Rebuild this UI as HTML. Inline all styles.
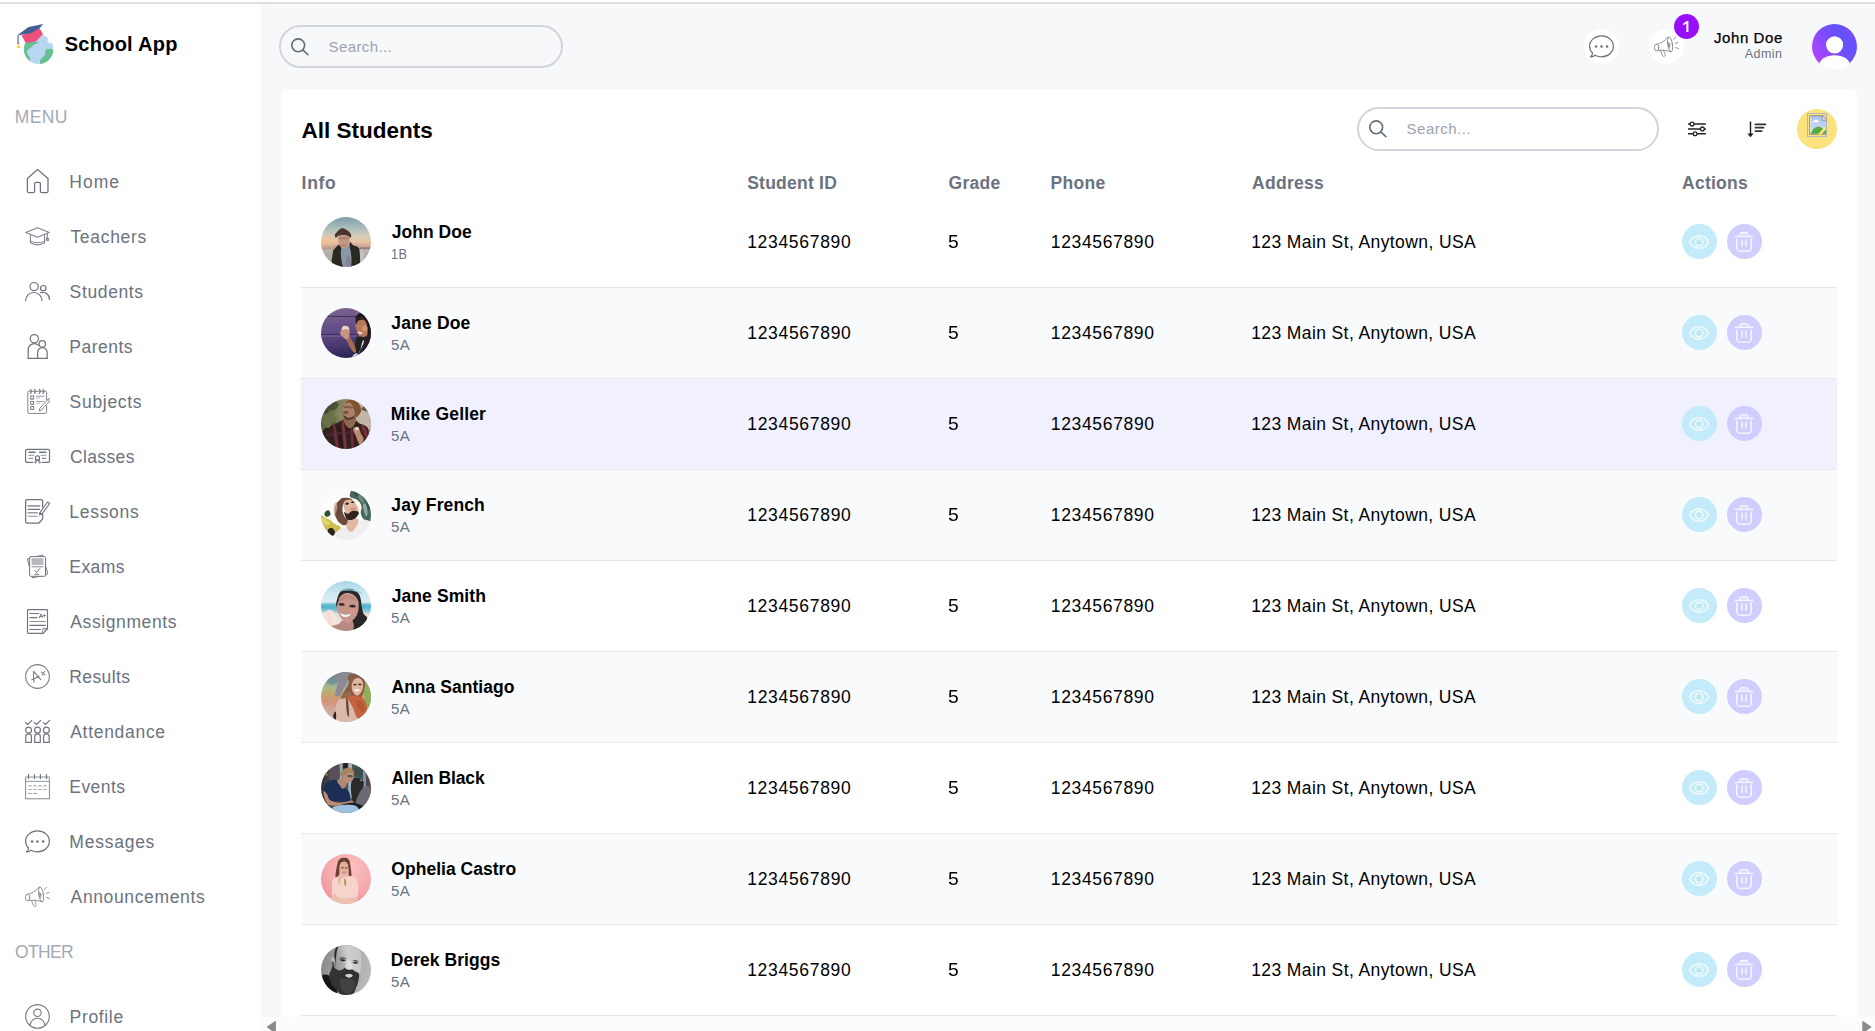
<!DOCTYPE html><html lang="en"><head><meta charset="utf-8"><title>School App</title><style>
*{box-sizing:border-box;margin:0;padding:0}
html,body{width:1875px;height:1031px;overflow:hidden;background:#f7f8fa}
body{font-family:"Liberation Sans",sans-serif;position:relative;color:#000;-webkit-font-smoothing:antialiased}
.abs{position:absolute}
.t{position:absolute;white-space:nowrap;line-height:1}
#topw{left:0;top:0;width:1875px;height:2px;background:#fff}
#topg{left:0;top:2px;width:1875px;height:2px;background:#dfe1df}
#side{left:0;top:4px;width:261px;height:1027px;background:#fff}
.mi{font-size:17.5px;color:#6b7280;left:70px}
.sec{font-size:17.5px;color:#a4aab5;left:16px;font-weight:400}
#card{left:281px;top:89px;width:1576px;height:960px;background:#fff;border-radius:7.5px}
.sb{border:2px solid #d1d5db;border-radius:22px}
.ph{color:#9ca3af;font-size:15px}
.th{font-size:17.5px;font-weight:700;color:#6b7280;top:174px}
.row{left:301px;width:1536px;height:91px;border-bottom:1px solid #e5e7eb}
.row.ev{background:#f8fafc}
.row.hv{background:#f1f0ff}
.nm{font-size:17.5px;font-weight:700;left:391px}
.cl{font-size:15px;color:#6b7280;left:391px}
.td{font-size:17.5px}
.btn{width:35px;height:35px;border-radius:50%}
</style></head><body>
<div id="topw" class="abs"></div><div id="topg" class="abs"></div>
<div id="side" class="abs"></div>
<svg class="abs" style="left:10px;top:15px" width="60" height="60" viewBox="0 0 60 60"><defs><clipPath id="gl"><circle cx="28.6" cy="34.3" r="14.7"/></clipPath></defs><circle cx="28.6" cy="34.3" r="14.7" fill="#b7d6f0"/><g clip-path="url(#gl)" fill="#68c08f"><path d="M13 27 C18 26 24 26.5 29 27.5 C27 29 24 28.5 22.5 31 C21.5 33 19 33 17.5 35.5 C16 38 18 40 19.5 42 C20.5 43.5 20 45.5 19.5 47 L12 44 Z"/><path d="M44 35 C40 33.5 37 33 35.5 35 C34.5 36.5 36 38.5 34.5 40.5 C33 42.5 30.5 43.5 30 46 L30 50 L42 46 Z"/></g><ellipse cx="39.3" cy="26" rx="1.7" ry="2.6" transform="rotate(-35 39.3 26)" fill="#f4fbff"/><path d="M11.6 20.4 L29.5 13.2 L33 19 L26 26.5 L15.5 27.8 Z" fill="#ee4f7b"/><path d="M7 20.4 L18.5 12 L33 9 L29.7 13.2 L20.8 18.3 Z" fill="#465e93"/><path d="M8.1 20.6 V28" stroke="#465e93" stroke-width="1.1" fill="none"/><rect x="7.2" y="27.8" width="1.8" height="1.4" fill="#ee4f7b"/><path d="M8.6 29 L10.8 33 H6.6 Z" fill="#f7d54a"/></svg>
<span id="brand" class="t " style="left:64.77px;top:33.91px;letter-spacing:0.248px;font-size:20px;font-weight:700;">School App</span>
<span id="menu" class="t sec" style="left:14.76px;top:109px;letter-spacing:0.392px;">MENU</span>
<div class="abs" style="left:25px;top:169px;width:25px;height:25px"><svg width="25" height="25" viewBox="0 0 25 25" fill="none" stroke="#70747f" stroke-width="1.3" stroke-linecap="round" stroke-linejoin="round" style="display:block;overflow:visible;"><g transform="translate(0,-0.5)"><path d="M12.5 0.9 L2.4 9.9 V22.8 a1.4 1.4 0 0 0 1.4 1.4 H8.2 a1.4 1.4 0 0 0 1.4-1.4 V15.2 a1.4 1.4 0 0 1 1.4-1.4 H14 a1.4 1.4 0 0 1 1.4 1.4 V22.8 a1.4 1.4 0 0 0 1.4 1.4 H21.6 a1.4 1.4 0 0 0 1.4-1.4 V9.9 Z"/></g></svg></div>
<span id="mi0" class="t mi" style="left:69.35px;top:173.71px;letter-spacing:1.005px;">Home</span>
<div class="abs" style="left:25px;top:224px;width:25px;height:25px"><svg width="25" height="25" viewBox="0 0 25 25" fill="none" stroke="#7d808a" stroke-width="1.05" stroke-linecap="round" stroke-linejoin="round" style="display:block;overflow:visible;"><g transform="translate(0,-0.5)"><path d="M12.5 4.3 L0.8 9.1 L12.5 13.8 L24.2 9.1 Z"/><path d="M5.4 11.2 V19.3 Q12.5 23.4 19.6 19.3 V11.2"/><path d="M5.4 17.6 Q12.5 21 19.6 17.6"/><path d="M22.3 10 V14.6"/><rect x="21.3" y="14.6" width="2.4" height="2.6" rx="0.4" fill="#9699a3" stroke-width="0.8"/></g></svg></div>
<span id="mi1" class="t mi" style="left:70.41px;top:228.71px;letter-spacing:0.7px;">Teachers</span>
<div class="abs" style="left:25px;top:279px;width:25px;height:25px"><svg width="25" height="25" viewBox="0 0 25 25" fill="none" stroke="#70747f" stroke-width="1.2" stroke-linecap="round" stroke-linejoin="round" style="display:block;overflow:visible;"><g transform="translate(0,-0.5)"><circle cx="9.1" cy="8.1" r="4.1"/><circle cx="18.25" cy="9.7" r="2.7"/><path d="M0.6 22.2 a8.2 8.2 0 0 1 16.4 0"/><path d="M15.6 14.2 C20.4 13.2 24.5 16 24.5 21"/></g></svg></div>
<span id="mi2" class="t mi" style="left:69.61px;top:283.71px;letter-spacing:0.633px;">Students</span>
<div class="abs" style="left:25px;top:334px;width:25px;height:25px"><svg width="25" height="25" viewBox="0 0 25 25" fill="none" stroke="#70747f" stroke-width="1.25" stroke-linecap="round" stroke-linejoin="round" style="display:block;overflow:visible;"><g transform="translate(0,-0.5)"><circle cx="9.3" cy="5.2" r="4.1"/><circle cx="17.3" cy="10.4" r="3.2"/><path d="M3.2 24.9 V16.2 a6.1 6.1 0 0 1 10.4 -4.3"/><path d="M3.2 24.9 H22.1"/><path d="M12.65 24.9 V18.8 a4.75 4.75 0 0 1 9.5 0 V24.9"/></g></svg></div>
<span id="mi3" class="t mi" style="left:69.35px;top:338.71px;letter-spacing:0.494px;">Parents</span>
<div class="abs" style="left:25px;top:389px;width:25px;height:25px"><svg width="25" height="25" viewBox="0 0 25 25" fill="none" stroke="#7d808a" stroke-width="0.95" stroke-linecap="round" stroke-linejoin="round" style="display:block;overflow:visible;"><g transform="translate(0,-0.5)"><path d="M21.6 11.5 V4 a1.2 1.2 0 0 0 -1.2 -1.2 H4 a1.2 1.2 0 0 0 -1.2 1.2 V23.7 a1.2 1.2 0 0 0 1.2 1.2 H20.4 a1.2 1.2 0 0 0 1.2 -1.2 V17.5"/><path d="M5.4 0.9 l1.4 2 l-1.4 2 M9.4 0.9 l1.4 2 l-1.4 2 M14.2 0.9 l1.4 2 l-1.4 2 M17.9 0.9 l1.4 2 l-1.4 2" stroke-width="1.2"/><g stroke-linejoin="miter" stroke-width="1.05"><rect x="5.7" y="7.2" width="2.9" height="3.4" rx="0.3"/><rect x="5.7" y="12.9" width="2.9" height="3" rx="0.2"/><rect x="5.7" y="18" width="2.9" height="3" rx="0.2"/></g><path d="M11.6 7.7 H19" stroke="#9c9fa8" stroke-width="1.1"/><path d="M11.6 9.6 H15" stroke="#b3b5bc" stroke-width="0.9"/><path d="M11.6 13 H19" stroke="#80838d" stroke-width="0.75"/><path d="M11.6 14.9 H15" stroke="#a6a8b0" stroke-width="0.75"/><path d="M14.4 22.2 L14.9 19.6 L22.9 11 L24.7 12.7 L16.7 21.3 Z M22.5 11.3 l2.2 -1.4" fill="#fff"/></g></svg></div>
<span id="mi4" class="t mi" style="left:69.61px;top:393.71px;letter-spacing:0.696px;">Subjects</span>
<div class="abs" style="left:25px;top:444px;width:25px;height:25px"><svg width="25" height="25" viewBox="0 0 25 25" fill="none" stroke="#70747f" stroke-width="1.2" stroke-linecap="round" stroke-linejoin="round" style="display:block;overflow:visible;"><g transform="translate(0,-0.5)"><path d="M7.7 18.9 H1.9 a1.3 1.3 0 0 1 -1.3 -1.3 V7.15 a1.3 1.3 0 0 1 1.3 -1.3 H23.2 a1.3 1.3 0 0 1 1.3 1.3 V17.6 a1.3 1.3 0 0 1 -1.3 1.3 H17.2"/><path d="M3.9 8.75 H10 M14.6 8.75 H20.9" stroke-width="1.3"/><path d="M3.9 11.8 H8.8 M16.1 11.8 H20.9 M3.9 14.85 H7.6 M17.3 14.85 H20.9" stroke="#8c8f9a" stroke-width="1.1"/><circle cx="12.5" cy="14.5" r="2.05"/><path d="M10.9 16 L9.6 19.4 L10.6 19.7 L11.8 16.6 M14.1 16 L15.4 19.4 L14.4 19.7 L13.2 16.6" stroke-width="0.9"/></g></svg></div>
<span id="mi5" class="t mi" style="left:69.88px;top:448.71px;letter-spacing:0.388px;">Classes</span>
<div class="abs" style="left:25px;top:499px;width:25px;height:25px"><svg width="25" height="25" viewBox="0 0 25 25" fill="none" stroke="#70747f" stroke-width="1.3" stroke-linecap="round" stroke-linejoin="round" style="display:block;overflow:visible;"><g transform="translate(0,-0.5)"><path d="M17.6 8.6 V2.5 a1.4 1.4 0 0 0 -1.4 -1.4 H2 a1.4 1.4 0 0 0 -1.4 1.4 V23.3 a1.4 1.4 0 0 0 1.4 1.4 H13.2 a1.4 1.4 0 0 0 1 -0.4 L17.2 21 a1.4 1.4 0 0 0 0.4 -1 V16"/><path d="M3.1 7.4 H14.6" stroke="#9a9ca3" stroke-width="1.6"/><path d="M3.1 10.9 H14.6" stroke-width="1.1"/><path d="M3.1 14.3 H12.2" stroke="#9a9ca3" stroke-width="1.5"/><path d="M3.1 17.7 H12.2" stroke="#8c8f9a" stroke-width="1.1"/><path d="M14.5 16.2 L15 13.9 L22.6 3.5 L24.7 5 L17.1 15.4 Z" fill="#fff" stroke-width="1.1"/><path d="M14.5 16.2 L15 13.9 L16.9 15.3 Z" fill="#70747f" stroke-width="0.6"/></g></svg></div>
<span id="mi6" class="t mi" style="left:69.35px;top:503.71px;letter-spacing:0.703px;">Lessons</span>
<div class="abs" style="left:25px;top:554px;width:25px;height:25px"><svg width="25" height="25" viewBox="0 0 25 25" fill="none" stroke="#70747f" stroke-width="1.0" stroke-linecap="round" stroke-linejoin="round" style="display:block;overflow:visible;"><g transform="translate(0,-0.5)"><rect x="4.6" y="3.1" width="15.9" height="19.7" rx="1" transform="rotate(-15 12.5 13)" stroke-width="1.0" stroke="#7a7d88"/><rect x="4.6" y="3.1" width="15.9" height="19.7" rx="1" fill="#fff"/><rect x="6.6" y="4.7" width="11.8" height="6.8" fill="#b7b9bf" stroke="none"/><path d="M6.6 13.2 H18.4" stroke="#a9abb3" stroke-width="1.4" stroke-linecap="butt"/><path d="M9.9 16.9 L11.6 19.2 L14.7 15.2" stroke-width="0.9"/><path d="M9.7 20.8 H13.7" stroke-width="1"/></g></svg></div>
<span id="mi7" class="t mi" style="left:69.35px;top:558.71px;letter-spacing:0.404px;">Exams</span>
<div class="abs" style="left:25px;top:609px;width:25px;height:25px"><svg width="25" height="25" viewBox="0 0 25 25" fill="none" stroke="#70747f" stroke-width="1.15" stroke-linecap="round" stroke-linejoin="round" style="display:block;overflow:visible;"><g transform="translate(0,-0.5)"><path d="M22.5 20.3 V1.9 a0.8 0.8 0 0 0 -0.8 -0.8 H3.3 a0.8 0.8 0 0 0 -0.8 0.8 V24.1 a0.8 0.8 0 0 0 0.8 0.8 H18.2 Z"/><path d="M18.2 24.9 C17.5 23 17.3 21.5 18 19.9 H22.5 C21.5 21.5 20.5 21.6 19.6 21.5" stroke-width="0.9"/><path d="M4.9 5 H13.6 M4.9 9.1 H12 M4.9 16.9 H20.2 M4.9 21 H15.4" stroke-width="1.1"/><path d="M4.9 13 H20.2" stroke="#8c8f9a" stroke-width="1.1"/><path d="M14.4 9.2 L16.2 5.3 L18 9.2 M15 8 H17.4" stroke-width="0.95"/><path d="M18.5 7 H20.5 M19.5 6 V8" stroke-width="0.8"/></g></svg></div>
<span id="mi8" class="t mi" style="left:70.26px;top:613.71px;letter-spacing:0.61px;">Assignments</span>
<div class="abs" style="left:25px;top:664px;width:25px;height:25px"><svg width="25" height="25" viewBox="0 0 25 25" fill="none" stroke="#7a7d88" stroke-width="1.0" stroke-linecap="round" stroke-linejoin="round" style="display:block;overflow:visible;"><g transform="translate(0,-0.5)"><circle cx="12.5" cy="13" r="11.85" stroke-width="1.1"/><path d="M9.1 18.8 C8.4 14.5 8.2 11 8.7 7.8 C11 10.5 13.5 13.5 15.7 16.2 M6.8 16.2 C9.5 15.3 12 13.8 14 12.5" stroke-width="1.1"/><path d="M16.4 8.6 L20 11.2 M19.4 7.9 L17.2 11.8" stroke-width="1.05"/></g></svg></div>
<span id="mi9" class="t mi" style="left:69.35px;top:668.71px;letter-spacing:0.385px;">Results</span>
<div class="abs" style="left:25px;top:719px;width:25px;height:25px"><svg width="25" height="25" viewBox="0 0 25 25" fill="none" stroke="#70747f" stroke-width="1.2" stroke-linecap="round" stroke-linejoin="round" style="display:block;overflow:visible;"><g transform="translate(0,-0.5)"><circle cx="3.6" cy="11.6" r="2.95"/><path d="M0.8000000000000003 23.9 V18.2 a2.8 2.8 0 0 1 5.6 0 V23.9 Z"/><path d="M0.3999999999999999 3.9 L2.7 6 L6.800000000000001 1.8" stroke-width="1.15"/><circle cx="12.5" cy="11.6" r="2.95"/><path d="M9.7 23.9 V18.2 a2.8 2.8 0 0 1 5.6 0 V23.9 Z"/><path d="M9.3 3.9 L11.6 6 L15.7 1.8" stroke-width="1.15"/><circle cx="21.4" cy="11.6" r="2.95"/><path d="M18.599999999999998 23.9 V18.2 a2.8 2.8 0 0 1 5.6 0 V23.9 Z"/><path d="M18.2 3.9 L20.5 6 L24.599999999999998 1.8" stroke-width="1.15"/></g></svg></div>
<span id="mi10" class="t mi" style="left:70.26px;top:723.71px;letter-spacing:0.696px;">Attendance</span>
<div class="abs" style="left:25px;top:774px;width:25px;height:25px"><svg width="25" height="25" viewBox="0 0 25 25" fill="none" stroke="#70747f" stroke-width="0.9" stroke-linecap="round" stroke-linejoin="round" style="display:block;overflow:visible;"><g transform="translate(0,-0.5)"><path d="M0.6 24.9 V3.6 H24.4 V24.9 Z" stroke-width="0.85" stroke-linejoin="miter"/><path d="M0.6 3.6 H24.4" stroke="#c4c6cc" stroke-width="1.3"/><path d="M0.6 7.9 H24.4" stroke-width="0.9" stroke="#8c8f9a"/><path d="M3.5 1 V5.1" stroke-width="1.15"/><path d="M9.4 1 V5.1" stroke-width="1.15"/><path d="M15.4 1 V5.1" stroke-width="1.15"/><path d="M21.5 1 V5.1" stroke-width="1.15"/><path d="M3.3 12.3 H6.699999999999999" stroke="#b9bbc2" stroke-width="1.5" stroke-linecap="butt"/><path d="M8.3 12.3 H11.700000000000001" stroke="#b9bbc2" stroke-width="1.5" stroke-linecap="butt"/><path d="M13.3 12.3 H16.7" stroke="#b9bbc2" stroke-width="1.5" stroke-linecap="butt"/><path d="M18.3 12.3 H21.7" stroke="#b9bbc2" stroke-width="1.5" stroke-linecap="butt"/><path d="M3.3 16.0 H6.699999999999999" stroke="#a6a8b1" stroke-width="1.0" stroke-linecap="butt"/><path d="M8.3 16.0 H11.700000000000001" stroke="#a6a8b1" stroke-width="1.0" stroke-linecap="butt"/><path d="M13.3 16.0 H16.7" stroke="#a6a8b1" stroke-width="1.0" stroke-linecap="butt"/><path d="M18.3 16.0 H21.7" stroke="#a6a8b1" stroke-width="1.0" stroke-linecap="butt"/><path d="M3.3 19.9 H6.699999999999999" stroke="#8e919c" stroke-width="1.0" stroke-linecap="butt"/><path d="M8.3 19.9 H11.700000000000001" stroke="#8e919c" stroke-width="1.0" stroke-linecap="butt"/></g></svg></div>
<span id="mi11" class="t mi" style="left:69.35px;top:778.71px;letter-spacing:0.426px;">Events</span>
<div class="abs" style="left:25px;top:829px;width:25px;height:25px"><svg width="25" height="25" viewBox="0 0 25 25" fill="none" stroke="#70747f" stroke-width="1.25" stroke-linecap="round" stroke-linejoin="round" style="display:block;overflow:visible;"><g transform="translate(0,-0.5)"><path d="M3.5 19.5 C1.7 17.8 0.6 15.4 0.6 12.8 C0.6 7 5.9 2.3 12.5 2.3 S24.4 7 24.4 12.8 S19.1 23.3 12.5 23.3 C10.1 23.3 7.9 22.7 6.1 21.7 C4.9 22.8 3.4 23.6 1.5 23.3 C2.9 22.3 3.7 21 3.5 19.5 Z"/><circle cx="7.1" cy="13" r="1.3" fill="#70747f" stroke="none"/><circle cx="12.5" cy="13" r="1.3" fill="#70747f" stroke="none"/><circle cx="18.1" cy="13" r="1.3" fill="#70747f" stroke="none"/></g></svg></div>
<span id="mi12" class="t mi" style="left:69.35px;top:833.71px;letter-spacing:0.753px;">Messages</span>
<div class="abs" style="left:25px;top:884px;width:25px;height:25px"><svg width="25" height="25" viewBox="0 0 25 25" fill="none" stroke="#858892" stroke-width="0.9" stroke-linecap="round" stroke-linejoin="round" style="display:block;overflow:visible;"><g transform="translate(0,-0.5)"><ellipse cx="2.6" cy="14" rx="2.25" ry="3.35"/><path d="M2.9 10.7 C7 10 11 7.5 14 3.6"/><path d="M3.6 17.2 C8 16 13 17 17.2 18.3"/><ellipse cx="16.1" cy="10.9" rx="2.3" ry="7.6" transform="rotate(-9 16.1 10.9)"/><ellipse cx="15" cy="11.5" rx="0.8" ry="2.8" transform="rotate(-9 15 11.5)"/><path d="M6.5 17 L8.3 21.6 C8.8 23 10 23.3 10.7 22.6 C11.4 21.9 11.2 21 10.8 20 L9.5 16.6"/><path d="M19.4 5.9 L21.7 3.7 M21.2 10 L23.8 9 M21.7 14 L24.6 15"/></g></svg></div>
<span id="mi13" class="t mi" style="left:70.58px;top:888.71px;letter-spacing:0.634px;">Announcements</span>
<span id="other" class="t sec" style="left:14.97px;top:943.91px;letter-spacing:-0.622px;">OTHER</span>
<div class="abs" style="left:25px;top:1004px;width:25px;height:25px"><svg width="25" height="25" viewBox="0 0 25 25" fill="none" stroke="#767984" stroke-width="1.1" stroke-linecap="round" stroke-linejoin="round" style="display:block;overflow:visible;"><g transform="translate(0,-0.5)"><circle cx="12.5" cy="12.9" r="11.8"/><circle cx="12.5" cy="9.3" r="3.7"/><path d="M5.2 22 a7.3 7.3 0 0 1 14.6 0"/></g></svg></div>
<span id="mi14" class="t mi" style="left:69.59px;top:1008.5px;letter-spacing:0.655px;">Profile</span>
<div class="abs sb" style="left:279px;top:25px;width:284px;height:43px"></div>
<div class="abs" style="left:290px;top:37px;width:19px;height:19px"><svg width="19" height="19" viewBox="0 0 19 19" fill="none" stroke="#626d7b" stroke-width="1.6" stroke-linecap="round" stroke-linejoin="round" style="display:block;overflow:visible;"><g transform="translate(0,0)"><circle cx="8.2" cy="8.3" r="6.4"/><path d="M13 13.1 L17.9 17.6"/></g></svg></div>
<span id="s1" class="t ph" style="left:328.6px;top:39.21px;letter-spacing:0.39px;">Search...</span>
<div class="abs" style="left:1584px;top:29px;width:35px;height:35px;border-radius:50%;background:#fff"><div style="position:absolute;left:5px;top:5px"><svg width="25" height="25" viewBox="0 0 25 25" fill="none" stroke="#70747f" stroke-width="1.25" stroke-linecap="round" stroke-linejoin="round" style="display:block;overflow:visible;"><g transform="translate(0,-0.5)"><path d="M3.5 19.5 C1.7 17.8 0.6 15.4 0.6 12.8 C0.6 7 5.9 2.3 12.5 2.3 S24.4 7 24.4 12.8 S19.1 23.3 12.5 23.3 C10.1 23.3 7.9 22.7 6.1 21.7 C4.9 22.8 3.4 23.6 1.5 23.3 C2.9 22.3 3.7 21 3.5 19.5 Z"/><circle cx="7.1" cy="13" r="1.3" fill="#70747f" stroke="none"/><circle cx="12.5" cy="13" r="1.3" fill="#70747f" stroke="none"/><circle cx="18.1" cy="13" r="1.3" fill="#70747f" stroke="none"/></g></svg></div></div>
<div class="abs" style="left:1649px;top:29px;width:35px;height:35px;border-radius:50%;background:#fff"><div style="position:absolute;left:5px;top:5px"><svg width="25" height="25" viewBox="0 0 25 25" fill="none" stroke="#858892" stroke-width="0.9" stroke-linecap="round" stroke-linejoin="round" style="display:block;overflow:visible;"><g transform="translate(0,-0.5)"><ellipse cx="2.6" cy="14" rx="2.25" ry="3.35"/><path d="M2.9 10.7 C7 10 11 7.5 14 3.6"/><path d="M3.6 17.2 C8 16 13 17 17.2 18.3"/><ellipse cx="16.1" cy="10.9" rx="2.3" ry="7.6" transform="rotate(-9 16.1 10.9)"/><ellipse cx="15" cy="11.5" rx="0.8" ry="2.8" transform="rotate(-9 15 11.5)"/><path d="M6.5 17 L8.3 21.6 C8.8 23 10 23.3 10.7 22.6 C11.4 21.9 11.2 21 10.8 20 L9.5 16.6"/><path d="M19.4 5.9 L21.7 3.7 M21.2 10 L23.8 9 M21.7 14 L24.6 15"/></g></svg></div></div>
<div class="abs" style="left:1674px;top:14px;width:25px;height:25px;border-radius:50%;background:#9810fa"></div>
<svg class="abs" style="left:1674px;top:14px" width="25" height="25" viewBox="1674 14 25 25"><path d="M1688.4 21.1 V32.1 H1686.35 V23.55 L1683.3 25.5 V23.45 L1686.7 21.1 Z" fill="#fff"/></svg>
<span id="uname" class="t " style="left:1714.06px;top:30.3px;letter-spacing:0.573px;font-size:15px;font-weight:400;-webkit-text-stroke:0.25px #000;">John Doe</span>
<span id="urole" class="t " style="left:1744.74px;top:47.91px;letter-spacing:0.475px;font-size:12.5px;color:#6b7280;">Admin</span>
<div class="abs" style="left:1812px;top:24px;width:45px;height:45px;border-radius:50%;overflow:hidden"><svg width="45" height="45" viewBox="0 0 45 45" style="display:block"><defs><linearGradient id="ag" x1="0.1" y1="0.85" x2="0.95" y2="0.35"><stop offset="0" stop-color="#ad46ff"/><stop offset="0.5" stop-color="#7a4bfb"/><stop offset="0.85" stop-color="#5f53fd"/><stop offset="1" stop-color="#7a4cf8"/></linearGradient><clipPath id="ac"><circle cx="22.5" cy="22.5" r="22.5"/></clipPath></defs><rect width="45" height="40" fill="url(#ag)"/><rect y="39.5" width="45" height="6" fill="#fff"/><g fill="#fff"><circle cx="22.6" cy="20.8" r="8.6"/><ellipse cx="22.6" cy="42" rx="15.7" ry="10.8"/></g></svg></div>
<div id="card" class="abs"></div>
<span id="title" class="t " style="left:301.4px;top:119.91px;letter-spacing:0.013px;font-size:22.5px;font-weight:700;">All Students</span>
<div class="abs sb" style="left:1357px;top:107px;width:302px;height:44px"></div>
<div class="abs" style="left:1368px;top:119px;width:19px;height:19px"><svg width="19" height="19" viewBox="0 0 19 19" fill="none" stroke="#626d7b" stroke-width="1.6" stroke-linecap="round" stroke-linejoin="round" style="display:block;overflow:visible;"><g transform="translate(0,0)"><circle cx="8.2" cy="8.3" r="6.4"/><path d="M13 13.1 L17.9 17.6"/></g></svg></div>
<span id="s2" class="t ph" style="left:1406.61px;top:121.0px;letter-spacing:0.496px;">Search...</span>
<div class="abs" style="left:1686px;top:118px;width:22px;height:22px"><svg width="22" height="22" viewBox="0 0 22 22" fill="none" stroke="#262626" stroke-width="1.5" style="display:block;overflow:visible"><path d="M2 6.1 H19.9 M2 10.9 H19.9 M2 15.75 H19.9"/><circle cx="6.1" cy="6.1" r="1.9" fill="#fff" stroke-width="1.3"/><circle cx="16.4" cy="10.9" r="1.9" fill="#fff" stroke-width="1.3"/><circle cx="9.1" cy="15.75" r="1.9" fill="#fff" stroke-width="1.3"/></svg></div>
<div class="abs" style="left:1745px;top:118px;width:22px;height:22px"><svg width="22" height="22" viewBox="0 0 22 22" fill="none" stroke="#1a1a1a" stroke-width="1.6" stroke-linecap="round" style="display:block;overflow:visible"><path d="M5.5 4.2 V17.6" stroke-width="1.4"/><path d="M3.2 16.1 L5.5 18.9 L7.8 16.1 Z" fill="#1a1a1a" stroke-width="0.6" stroke-linejoin="round"/><path d="M10.4 6.4 H20.5 M10.4 9.7 H18.6 M10.4 13.1 H16.7" stroke="#333" stroke-width="1.7"/></svg></div>
<div class="abs" style="left:1797px;top:109px;width:40px;height:40px;border-radius:50%;background:#fae27c"></div>
<div class="abs" style="left:1807px;top:113px;width:20px;height:24px"><svg width="20" height="24" viewBox="0 0 20 24" style="display:block"><defs><linearGradient id="sky" x1="0" y1="0" x2="0" y2="1"><stop offset="0" stop-color="#a9c4ee"/><stop offset="1" stop-color="#d3dff3"/></linearGradient><clipPath id="bc"><rect x="2.2" y="2.2" width="17" height="19.6"/></clipPath></defs><rect x="0.5" y="0.5" width="19" height="23" fill="none" stroke="#b3b6c3" stroke-width="1"/><g clip-path="url(#bc)"><rect x="2.2" y="2.2" width="18" height="19.6" fill="#77787c"/><rect x="3.3" y="3.2" width="17" height="17.6" fill="url(#sky)"/><rect x="3.3" y="3.2" width="1" height="17.6" fill="#e8eefa"/><path d="M5.3 9.2 Q5.6 7.6 7.3 7.7 Q8.6 5.4 10.6 7.2 Q12 7.2 11.9 9.2 Z" fill="#fff"/><path d="M3.8 20.8 C6 13.5 13 11.5 17 17 L19.5 14.5 V20.8 Z" fill="#55ad3a"/><path d="M15.3 2.2 V7.2 H20 V2.2 Z" fill="#fae27c"/><path d="M15.3 2.2 L15.3 7.2 L20 7.2 Z" fill="#e8e9ec" stroke="#8a8b90" stroke-width="0.9"/><path d="M19.5 12.2 L10.4 21.8 H14 L19.5 16 Z" fill="#fae27c"/></g></svg></div>
<span id="th0" class="t th" style="left:301.59px;top:174.91px;letter-spacing:0.695px;">Info</span>
<span id="th1" class="t th" style="left:747.2px;top:174.91px;letter-spacing:0.239px;">Student ID</span>
<span id="th2" class="t th" style="left:948.52px;top:174.91px;letter-spacing:0.292px;">Grade</span>
<span id="th3" class="t th" style="left:1050.59px;top:174.91px;letter-spacing:0.28px;">Phone</span>
<span id="th4" class="t th" style="left:1252.06px;top:174.91px;letter-spacing:0.285px;">Address</span>
<span id="th5" class="t th" style="left:1682.1px;top:174.91px;letter-spacing:0.236px;">Actions</span>
<div class="abs row" style="top:197px"></div>
<div class="abs" style="left:321px;top:217px;width:50px;height:50px"><svg width="50" height="50" viewBox="0 0 50 50" style="display:block"><defs><clipPath id="c0"><circle cx="25" cy="25" r="25"/></clipPath><filter id="b0" x="-20%" y="-20%" width="140%" height="140%"><feGaussianBlur stdDeviation="0.55"/></filter><linearGradient id="g0" x1="0" y1="0" x2="0" y2="1"><stop offset="0" stop-color="#7b9eab"/><stop offset="0.22" stop-color="#a9bdbb"/><stop offset="0.36" stop-color="#cfcbb9"/><stop offset="0.48" stop-color="#e9c8a6"/><stop offset="0.58" stop-color="#d0a898"/><stop offset="0.635" stop-color="#b89a92"/><stop offset="0.66" stop-color="#b9b3ad"/><stop offset="1" stop-color="#aaa39c"/></linearGradient><radialGradient id="gl0"><stop offset="0" stop-color="#f5c08a" stop-opacity="0.85"/><stop offset="1" stop-color="#f0c090" stop-opacity="0"/></radialGradient></defs><g clip-path="url(#c0)"><rect width="50" height="50" fill="url(#g0)"/><g filter="url(#b0)"><ellipse cx="4" cy="24.5" rx="14" ry="6" fill="url(#gl0)"/><rect x="39.00" y="30.38" width="11.06" height="1.46" fill="#8d7a76"/><path d="M39.00 33.29 C39.83 31.25 41.79 32.86 42.49 35.04 C43.20 37.22 43.03 41.14 42.20 43.19 C41.37 45.24 39.41 46.53 38.71 44.35 C38.00 42.18 38.17 35.34 39.00 33.29Z" fill="#bcc4c8"/><path d="M11.64 51.05 C9.27 47.53 11.55 39.20 11.93 35.04 C12.32 30.88 11.98 33.80 13.39 32.13 C14.80 30.47 16.80 27.86 18.34 27.47 C19.87 27.09 19.67 28.98 20.37 30.38 C21.08 31.79 21.02 29.33 21.54 33.88 C22.05 38.42 24.88 47.27 22.70 51.05 C20.52 54.83 14.01 54.57 11.64 51.05Z" fill="#2a2a24"/><path d="M29.69 51.05 C28.15 47.27 29.36 38.42 29.10 33.88 C28.85 29.33 28.52 32.31 28.52 30.38 C28.52 28.46 28.34 25.66 29.10 25.15 C29.87 24.63 30.22 26.90 32.01 28.06 C33.81 29.21 35.82 29.10 37.25 30.38 C38.69 31.66 38.17 30.55 38.53 33.88 C38.89 37.21 39.42 41.74 38.88 45.52 C38.34 49.30 38.11 49.83 36.09 51.05 C34.07 52.26 31.22 54.83 29.69 51.05Z" fill="#2a2a24"/><path d="M20.37 30.97 C21.68 26.42 26.45 25.97 28.52 30.38 C30.60 34.80 31.11 46.50 29.80 51.05 C28.50 55.59 24.66 55.47 22.58 51.05 C20.51 46.63 19.07 35.51 20.37 30.97Z" fill="#8997a6"/><path d="M25.03 41.44 C25.67 38.95 27.50 37.58 28.52 39.70 C29.55 41.81 30.33 48.55 29.69 51.05 C29.05 53.54 26.64 53.16 25.61 51.05 C24.59 48.93 24.39 43.94 25.03 41.44Z" fill="#857d97" opacity="0.85"/><path d="M17.46 19.32 C18.44 17.79 19.92 18.22 22.12 18.16 C24.32 18.10 26.04 18.14 27.47 19.03 C28.91 19.93 28.51 20.51 28.64 22.24 C28.77 23.96 28.66 25.10 28.06 26.89 C27.45 28.68 27.21 29.42 25.90 30.38 C24.60 31.34 23.59 31.49 22.12 31.26 C20.65 31.03 20.18 30.68 19.21 29.34 C18.24 27.99 18.08 27.35 17.69 25.15 C17.31 22.94 16.49 20.86 17.46 19.32Z" fill="#c29883"/><path d="M18.63 20.78 C20.36 20.37 24.92 20.19 26.78 20.49 C28.63 20.78 28.80 21.71 27.07 22.12 C25.34 22.53 20.77 22.65 18.92 22.35 C17.06 22.06 16.90 21.19 18.63 20.78Z" fill="#9a7565" opacity="0.7"/><path d="M20.37 27.47 C21.40 27.15 24.59 27.15 25.61 27.47 C26.64 27.79 26.05 28.61 25.03 28.93 C24.00 29.25 21.98 29.25 20.95 28.93 C19.93 28.61 19.35 27.79 20.37 27.47Z" fill="#a8766a" opacity="0.6"/><path d="M14.55 16.41 C15.35 15.26 16.31 14.53 17.46 13.50 C18.61 12.48 18.64 12.21 19.79 11.76 C20.94 11.31 21.42 11.21 22.70 11.47 C23.98 11.72 24.33 12.09 25.61 12.92 C26.89 13.75 27.52 14.10 28.52 15.25 C29.52 16.40 29.97 16.98 30.15 18.16 C30.33 19.34 30.08 20.45 29.34 20.61 C28.59 20.76 28.36 19.45 26.78 18.86 C25.19 18.27 24.17 17.93 22.12 17.93 C20.07 17.93 19.02 18.24 17.46 18.86 C15.90 19.47 15.81 20.75 15.02 20.72 C14.22 20.70 13.96 19.69 13.85 18.74 C13.75 17.80 13.76 17.57 14.55 16.41Z" fill="#49342d"/></g></g></svg></div>
<span id="nm0" class="t nm" style="left:391.65px;top:223.8px;letter-spacing:0.043px;">John Doe</span>
<span id="cl0" class="t cl" style="left:390.94px;top:245.61px;letter-spacing:0.332px;transform:scaleX(0.86);transform-origin:0 0;">1B</span>
<span id="id0" class="t td sid" style="left:747.14px;top:233.8px;letter-spacing:0.702px;">1234567890</span>
<span id="gr0" class="t td gr" style="left:948.1px;top:233.8px;transform:scaleX(1.1);transform-origin:0 0;">5</span>
<span id="phn0" class="t td phn" style="left:1050.86px;top:233.8px;letter-spacing:0.636px;">1234567890</span>
<span id="ad0" class="t td ad" style="left:1251.13px;top:233.8px;letter-spacing:0.401px;">123 Main St, Anytown, USA</span>
<div class="abs btn" style="left:1682px;top:224px;background:#c3ebfa"><svg width="35" height="35" viewBox="0 0 35 35" fill="none" stroke="#f2fbff" stroke-width="1.5" style="display:block"><path d="M7.7 18 C11.5 9.8 22.7 9.8 26.5 18 C22.7 26.2 11.5 26.2 7.7 18 Z" stroke-linejoin="round"/><circle cx="17.1" cy="18" r="3.7" fill="#b5e6ec" fill-opacity="0.4"/></svg></div>
<div class="abs btn" style="left:1727px;top:224px;background:#cfceff"><svg width="35" height="35" viewBox="0 0 35 35" fill="none" stroke="#f6f5ff" stroke-width="1.6" style="display:block"><path d="M7.6 12.4 H26.2" stroke-width="1.5"/><path d="M13.2 12.2 V10.3 a1.6 1.6 0 0 1 1.6 -1.6 H19.2 a1.6 1.6 0 0 1 1.6 1.6 V12.2"/><path d="M14.6 10.5 H19.4" stroke-width="1.2" stroke="#e4e2ff"/><path d="M9.8 14.5 V23.9 a3.4 3.4 0 0 0 3.4 3.4 H20.8 a3.4 3.4 0 0 0 3.4 -3.4 V14.5"/><path d="M15 15.4 V22.8 M19 15.4 V22.8" stroke-width="1.6"/></svg></div>
<div class="abs row ev" style="top:288px"></div>
<div class="abs" style="left:321px;top:308px;width:50px;height:50px"><svg width="50" height="50" viewBox="0 0 50 50" style="display:block"><defs><clipPath id="c1"><circle cx="25" cy="25" r="25"/></clipPath><filter id="b1" x="-20%" y="-20%" width="140%" height="140%"><feGaussianBlur stdDeviation="0.55"/></filter><linearGradient id="g1" x1="0.2" y1="0" x2="0.35" y2="1"><stop offset="0" stop-color="#7f668f"/><stop offset="0.45" stop-color="#604b86"/><stop offset="0.75" stop-color="#4a3a72"/><stop offset="1" stop-color="#2a2552"/></linearGradient></defs><g clip-path="url(#c1)"><rect width="50" height="50" fill="url(#g1)"/><g filter="url(#b1)"><rect x="6.69" y="7.86" width="28.23" height="1.16" fill="#473260"/><rect x="0.00" y="25.96" width="34.34" height="1.28" fill="#3d2d62"/><rect x="0.00" y="27.47" width="34.34" height="1.05" fill="#7d6898"/><path d="M34.34 10.48 C34.34 9.71 34.81 8.27 36.09 6.98 C37.37 5.70 38.37 4.78 40.16 4.66 C41.96 4.53 42.70 5.12 44.24 6.40 C45.77 7.68 46.12 8.30 47.15 10.48 C48.17 12.65 48.23 13.48 48.89 16.30 C49.56 19.12 49.85 18.16 50.17 23.28 C50.49 28.41 51.14 34.97 50.35 39.58 C49.56 44.19 47.65 45.52 46.57 44.24 C45.48 42.96 45.40 37.86 45.40 33.76 C45.40 29.66 46.44 29.20 46.57 25.61 C46.69 22.03 46.62 20.41 45.98 17.46 C45.34 14.52 45.06 14.02 43.66 12.22 C42.25 10.43 41.25 9.70 39.58 9.31 C37.92 8.93 37.24 10.22 36.09 10.48 C34.94 10.73 34.34 11.25 34.34 10.48Z" fill="#1d1619"/><path d="M34.92 10.48 C36.08 9.20 37.66 8.93 39.58 9.31 C41.50 9.70 42.25 10.43 43.66 12.22 C45.06 14.02 45.34 15.03 45.98 17.46 C46.62 19.90 46.69 20.98 46.57 23.28 C46.44 25.59 46.30 26.63 45.40 27.94 C44.51 29.25 43.90 29.07 42.49 29.22 C41.08 29.37 40.28 29.43 39.00 28.64 C37.72 27.84 37.57 27.43 36.67 25.61 C35.77 23.79 35.44 22.68 34.92 20.37 C34.41 18.07 34.34 17.31 34.34 15.13 C34.34 12.96 33.77 11.76 34.92 10.48Z" fill="#b8785b"/><ellipse cx="43.66" cy="20.37" rx="2.62" ry="3.20" fill="#da9a7a" opacity="0.8"/><path d="M34.92 10.48 C35.88 8.94 37.66 8.93 39.58 9.31 C41.50 9.70 43.40 11.71 43.66 12.22 C43.91 12.74 42.15 11.51 40.75 11.64 C39.34 11.77 38.47 11.78 37.25 12.81 C36.04 13.83 35.73 16.81 35.22 16.30 C34.70 15.79 33.96 12.01 34.92 10.48Z" fill="#2a1b1c"/><path d="M36.96 23.75 C37.60 23.49 39.85 24.01 40.75 24.45 C41.64 24.88 41.68 25.47 41.04 25.73 C40.40 25.98 38.73 26.05 37.83 25.61 C36.94 25.18 36.32 24.00 36.96 23.75Z" fill="#f4e6e0"/><path d="M34.92 30.27 C35.82 28.37 36.75 28.87 38.42 28.64 C40.08 28.41 41.59 28.09 42.49 29.22 C43.39 30.35 42.88 31.99 42.49 33.76 C42.11 35.53 41.64 34.69 40.75 37.25 C39.85 39.81 39.95 43.54 38.42 45.40 C36.88 47.26 35.30 46.20 33.76 45.69 C32.22 45.18 31.30 44.93 31.43 43.07 C31.56 41.22 33.57 40.07 34.34 37.25 C35.11 34.44 34.03 32.16 34.92 30.27Z" fill="#1c2420"/><path d="M43.07 29.10 C43.97 27.57 44.97 29.22 46.57 27.94 C48.17 26.66 49.52 20.72 50.35 23.28 C51.18 25.84 51.44 34.91 50.35 39.58 C49.26 44.25 47.51 43.25 45.40 44.53 C43.29 45.81 41.39 47.51 40.75 45.40 C40.10 43.29 41.98 38.51 42.49 34.92 C43.00 31.34 42.18 30.64 43.07 29.10Z" fill="#2a1d20"/><path d="M41.33 33.76 C42.25 31.74 44.02 31.65 42.61 35.04 C41.20 38.43 37.38 46.20 34.92 49.19 C32.47 52.17 31.56 49.44 31.43 48.60 C31.30 47.77 32.81 46.36 34.34 45.40 C35.88 44.44 36.88 46.80 38.42 44.24 C39.95 41.68 40.41 35.78 41.33 33.76Z" fill="#d5cde8"/><path d="M25.03 30.27 C24.26 27.04 26.34 26.67 28.52 29.10 C30.70 31.54 34.16 38.10 34.92 41.33 C35.69 44.55 34.19 46.20 32.01 43.77 C29.84 41.34 25.80 33.49 25.03 30.27Z" fill="#a66b52"/><path d="M19.21 25.61 C19.21 23.43 20.38 20.36 21.54 18.63 C22.69 16.90 23.04 17.63 24.45 17.75 C25.86 17.88 27.02 17.48 27.94 19.21 C28.86 20.94 28.77 23.18 28.64 25.61 C28.51 28.04 28.15 28.96 27.36 30.27 C26.56 31.57 26.31 31.93 25.03 31.55 C23.75 31.16 22.82 29.83 21.54 28.52 C20.26 27.22 19.21 27.79 19.21 25.61Z" fill="#c9957b"/><path d="M21.25 19.21 C21.89 18.35 23.04 17.86 24.45 17.93 C25.86 17.99 27.01 18.64 27.65 19.50 C28.29 20.36 28.06 21.51 27.36 21.83 C26.65 22.15 25.73 20.95 24.45 20.95 C23.17 20.95 22.24 22.21 21.54 21.83 C20.83 21.44 20.61 20.07 21.25 19.21Z" fill="#e9d3ca"/></g></g></svg></div>
<span id="nm1" class="t nm" style="left:391.33px;top:314.8px;letter-spacing:0.162px;">Jane Doe</span>
<span id="cl1" class="t cl" style="left:390.96px;top:336.61px;letter-spacing:0.439px;">5A</span>
<span id="id1" class="t td sid" style="left:747.21px;top:324.8px;letter-spacing:0.7px;">1234567890</span>
<span id="gr1" class="t td gr" style="left:948.1px;top:324.8px;transform:scaleX(1.1);transform-origin:0 0;">5</span>
<span id="phn1" class="t td phn" style="left:1050.86px;top:324.8px;letter-spacing:0.638px;">1234567890</span>
<span id="ad1" class="t td ad" style="left:1251.17px;top:324.8px;letter-spacing:0.394px;">123 Main St, Anytown, USA</span>
<div class="abs btn" style="left:1682px;top:315px;background:#c3ebfa"><svg width="35" height="35" viewBox="0 0 35 35" fill="none" stroke="#f2fbff" stroke-width="1.5" style="display:block"><path d="M7.7 18 C11.5 9.8 22.7 9.8 26.5 18 C22.7 26.2 11.5 26.2 7.7 18 Z" stroke-linejoin="round"/><circle cx="17.1" cy="18" r="3.7" fill="#b5e6ec" fill-opacity="0.4"/></svg></div>
<div class="abs btn" style="left:1727px;top:315px;background:#cfceff"><svg width="35" height="35" viewBox="0 0 35 35" fill="none" stroke="#f6f5ff" stroke-width="1.6" style="display:block"><path d="M7.6 12.4 H26.2" stroke-width="1.5"/><path d="M13.2 12.2 V10.3 a1.6 1.6 0 0 1 1.6 -1.6 H19.2 a1.6 1.6 0 0 1 1.6 1.6 V12.2"/><path d="M14.6 10.5 H19.4" stroke-width="1.2" stroke="#e4e2ff"/><path d="M9.8 14.5 V23.9 a3.4 3.4 0 0 0 3.4 3.4 H20.8 a3.4 3.4 0 0 0 3.4 -3.4 V14.5"/><path d="M15 15.4 V22.8 M19 15.4 V22.8" stroke-width="1.6"/></svg></div>
<div class="abs row hv" style="top:379px"></div>
<div class="abs" style="left:321px;top:399px;width:50px;height:50px"><svg width="50" height="50" viewBox="0 0 50 50" style="display:block"><defs><clipPath id="c2"><circle cx="25" cy="25" r="25"/></clipPath><filter id="b2" x="-20%" y="-20%" width="140%" height="140%"><feGaussianBlur stdDeviation="0.55"/></filter><linearGradient id="g2" x1="0" y1="0" x2="1" y2="0.2"><stop offset="0" stop-color="#4c4f33"/><stop offset="0.3" stop-color="#74774d"/><stop offset="0.55" stop-color="#8f8d68"/><stop offset="0.78" stop-color="#bdae9e"/><stop offset="1" stop-color="#ad9f90"/></linearGradient></defs><g clip-path="url(#c2)"><rect width="50" height="50" fill="url(#g2)"/><g filter="url(#b2)"><ellipse cx="9.31" cy="6.40" rx="8.73" ry="5.24" fill="#43472f" opacity="0.8"/><ellipse cx="7.57" cy="20.95" rx="8.15" ry="6.40" fill="#6c7146" opacity="0.8"/><ellipse cx="18.63" cy="12.22" rx="3.49" ry="6.40" fill="#85875c" opacity="0.6"/><ellipse cx="4.66" cy="12.22" rx="2.91" ry="2.33" fill="#3a3f2b" opacity="0.7"/><ellipse cx="13.39" cy="25.61" rx="3.49" ry="2.33" fill="#4d5235" opacity="0.7"/><path d="M34.92 18.63 C35.44 15.55 38.18 11.89 40.75 10.48 C43.31 9.07 44.52 10.69 46.57 12.22 C48.61 13.76 49.29 13.49 50.06 17.46 C50.83 21.43 51.08 27.96 50.06 30.27 C49.03 32.57 47.96 29.22 45.40 27.94 C42.84 26.66 40.72 26.50 38.42 24.45 C36.11 22.40 34.41 21.70 34.92 18.63Z" fill="#c4b6a7"/><path d="M40.75 10.48 C40.23 9.32 42.57 6.80 44.24 7.57 C45.90 8.34 47.80 12.82 48.31 13.97 C48.82 15.12 48.23 13.57 46.57 12.81 C44.90 12.04 41.26 11.63 40.75 10.48Z" fill="#5e574a"/><path d="M1.75 33.76 C1.75 29.47 6.74 26.75 8.15 30.27 C9.56 33.79 9.56 49.00 8.15 49.77 C6.74 50.54 1.75 38.05 1.75 33.76Z" fill="#25201d"/><path d="M8.15 49.77 C2.39 46.37 2.78 39.73 2.91 34.92 C3.04 30.12 6.43 29.99 8.73 27.94 C11.04 25.89 10.95 26.89 13.39 25.61 C15.82 24.33 17.36 23.14 19.79 22.12 C22.22 21.09 22.91 19.67 24.45 20.95 C25.98 22.24 25.24 26.40 26.78 27.94 C28.31 29.48 29.64 29.22 31.43 27.94 C33.22 26.66 33.39 22.89 34.92 22.12 C36.46 21.35 36.37 23.42 38.42 24.45 C40.47 25.47 42.29 25.37 44.24 26.78 C46.18 28.18 46.69 28.03 47.26 30.85 C47.84 33.67 48.55 36.38 46.86 39.58 C45.17 42.78 43.49 43.03 39.58 45.40 C35.68 47.77 36.02 49.39 29.10 50.35 C22.19 51.31 13.91 53.16 8.15 49.77Z" fill="#32201f"/><path d="M12.22 29.10 C12.03 24.49 13.11 23.77 14.26 27.36 C15.41 30.94 17.27 40.79 17.46 45.40 C17.65 50.01 16.29 51.90 15.13 48.31 C13.98 44.73 12.42 33.71 12.22 29.10Z" fill="#7c2b3f" opacity="0.9"/><path d="M20.95 25.61 C20.89 19.91 21.97 19.00 22.99 23.86 C24.02 28.73 25.55 42.03 25.61 47.73 C25.68 53.43 24.31 54.63 23.28 49.77 C22.26 44.90 21.02 31.31 20.95 25.61Z" fill="#8e3448" opacity="0.85"/><path d="M29.39 30.27 C29.46 25.79 30.37 25.55 31.14 29.39 C31.91 33.24 32.95 43.25 32.89 47.73 C32.82 52.21 31.62 53.61 30.85 49.77 C30.08 45.93 29.33 34.75 29.39 30.27Z" fill="#7c2b3f" opacity="0.85"/><path d="M40.16 26.19 C40.29 24.78 41.73 25.69 43.07 27.36 C44.42 29.02 45.76 31.20 46.27 33.76 C46.79 36.32 46.23 39.00 45.40 39.00 C44.57 39.00 43.64 36.58 42.49 33.76 C41.34 30.94 40.03 27.60 40.16 26.19Z" fill="#8a3046" opacity="0.9"/><path d="M16.30 30.27 C16.04 26.17 17.47 25.77 18.63 29.10 C19.78 32.43 21.28 41.30 21.54 45.40 C21.79 49.50 20.94 51.06 19.79 47.73 C18.64 44.40 16.55 34.37 16.30 30.27Z" fill="#1f1a1c" opacity="0.6"/><path d="M9.31 34.34 C17.38 33.06 38.33 31.17 46.57 30.85 C54.80 30.53 54.81 31.61 46.74 32.89 C38.67 34.17 18.13 36.35 9.90 36.67 C1.66 36.99 1.25 35.62 9.31 34.34Z" fill="#55303a" opacity="0.55"/><path d="M24.45 19.79 C26.75 18.51 31.56 16.69 33.76 17.46 C35.96 18.23 34.97 20.95 34.46 23.28 C33.95 25.61 33.12 27.01 31.43 28.06 C29.74 29.11 28.57 29.11 26.78 28.06 C24.98 27.01 23.80 25.10 23.28 23.28 C22.77 21.46 22.14 21.07 24.45 19.79Z" fill="#8e6751"/><path d="M22.12 7.57 C22.63 5.65 23.04 4.97 24.45 4.07 C25.86 3.18 26.98 2.98 28.52 3.49 C30.06 4.00 30.41 4.48 31.43 6.40 C32.46 8.32 32.67 10.05 33.18 12.22 C33.69 14.40 34.14 14.86 33.76 16.30 C33.38 17.73 32.97 17.95 31.43 18.74 C29.90 19.54 28.57 20.19 26.78 19.91 C24.98 19.63 24.31 19.02 23.28 17.46 C22.26 15.90 22.37 14.98 22.12 12.81 C21.86 10.63 21.61 9.49 22.12 7.57Z" fill="#aa8168"/><path d="M22.70 16.30 C23.49 16.30 24.85 18.31 26.78 18.63 C28.70 18.95 29.87 18.39 31.43 17.75 C32.99 17.11 33.47 15.65 33.88 15.72 C34.29 15.78 33.83 17.12 33.29 18.04 C32.76 18.97 32.87 19.29 31.43 19.91 C30.00 20.52 28.59 21.12 26.78 20.84 C24.96 20.56 24.06 19.63 23.17 18.63 C22.27 17.63 21.91 16.30 22.70 16.30Z" fill="#553829"/><path d="M22.70 12.51 C23.53 11.98 25.81 11.84 26.78 12.22 C27.74 12.61 27.90 13.72 27.07 14.26 C26.23 14.80 23.95 15.05 22.99 14.67 C22.03 14.28 21.87 13.05 22.70 12.51Z" fill="#66463a" opacity="0.85"/><path d="M23.28 6.98 C25.08 6.73 29.64 7.05 31.43 7.57 C33.22 8.08 33.22 9.06 31.43 9.31 C29.64 9.57 25.08 9.24 23.28 8.73 C21.49 8.22 21.49 7.24 23.28 6.98Z" fill="#6e4e40" opacity="0.7"/><path d="M24.45 4.07 C24.06 3.69 25.24 2.45 26.78 1.75 C28.31 1.04 29.38 0.62 31.43 0.87 C33.48 1.13 34.42 1.57 36.09 2.91 C37.75 4.25 38.08 5.19 39.00 6.98 C39.92 8.78 40.38 9.27 40.28 11.06 C40.18 12.85 39.71 13.57 38.53 15.13 C37.36 16.70 36.08 18.80 34.92 18.16 C33.77 17.52 34.06 14.81 33.29 12.22 C32.53 9.64 32.48 8.32 31.43 6.40 C30.38 4.48 30.06 4.00 28.52 3.49 C26.98 2.98 24.83 4.46 24.45 4.07Z" fill="#7f5231"/><path d="M32.01 30.27 C32.01 28.22 33.64 28.20 34.92 27.94 C36.20 27.68 36.81 27.82 37.83 29.10 C38.86 30.38 38.53 31.46 39.58 33.76 C40.63 36.07 42.35 37.25 42.61 39.58 C42.86 41.91 41.67 43.07 40.75 44.35 C39.82 45.63 39.70 46.96 38.42 45.40 C37.14 43.84 36.33 40.58 34.92 37.25 C33.52 33.92 32.01 32.32 32.01 30.27Z" fill="#b98c72"/><path d="M34.34 28.64 C34.85 28.01 36.51 27.83 37.25 28.29 C38.00 28.75 38.23 30.11 37.72 30.73 C37.21 31.36 35.67 31.60 34.92 31.14 C34.18 30.68 33.83 29.27 34.34 28.64Z" fill="#ecd9c5"/></g></g></svg></div>
<span id="nm2" class="t nm" style="left:390.82px;top:405.8px;letter-spacing:0.174px;">Mike Geller</span>
<span id="cl2" class="t cl" style="left:391.03px;top:427.61px;letter-spacing:0.464px;">5A</span>
<span id="id2" class="t td sid" style="left:747.21px;top:415.8px;letter-spacing:0.694px;">1234567890</span>
<span id="gr2" class="t td gr" style="left:948.12px;top:415.8px;transform:scaleX(1.1);transform-origin:0 0;">5</span>
<span id="phn2" class="t td phn" style="left:1050.86px;top:415.8px;letter-spacing:0.645px;">1234567890</span>
<span id="ad2" class="t td ad" style="left:1251.17px;top:415.8px;letter-spacing:0.394px;">123 Main St, Anytown, USA</span>
<div class="abs btn" style="left:1682px;top:406px;background:#c3ebfa"><svg width="35" height="35" viewBox="0 0 35 35" fill="none" stroke="#f2fbff" stroke-width="1.5" style="display:block"><path d="M7.7 18 C11.5 9.8 22.7 9.8 26.5 18 C22.7 26.2 11.5 26.2 7.7 18 Z" stroke-linejoin="round"/><circle cx="17.1" cy="18" r="3.7" fill="#b5e6ec" fill-opacity="0.4"/></svg></div>
<div class="abs btn" style="left:1727px;top:406px;background:#cfceff"><svg width="35" height="35" viewBox="0 0 35 35" fill="none" stroke="#f6f5ff" stroke-width="1.6" style="display:block"><path d="M7.6 12.4 H26.2" stroke-width="1.5"/><path d="M13.2 12.2 V10.3 a1.6 1.6 0 0 1 1.6 -1.6 H19.2 a1.6 1.6 0 0 1 1.6 1.6 V12.2"/><path d="M14.6 10.5 H19.4" stroke-width="1.2" stroke="#e4e2ff"/><path d="M9.8 14.5 V23.9 a3.4 3.4 0 0 0 3.4 3.4 H20.8 a3.4 3.4 0 0 0 3.4 -3.4 V14.5"/><path d="M15 15.4 V22.8 M19 15.4 V22.8" stroke-width="1.6"/></svg></div>
<div class="abs row ev" style="top:470px"></div>
<div class="abs" style="left:321px;top:490px;width:50px;height:50px"><svg width="50" height="50" viewBox="0 0 50 50" style="display:block"><defs><clipPath id="c3"><circle cx="25" cy="25" r="25"/></clipPath><filter id="b3" x="-20%" y="-20%" width="140%" height="140%"><feGaussianBlur stdDeviation="0.55"/></filter></defs><g clip-path="url(#c3)"><rect width="50" height="50" fill="#fcfcfb"/><g filter="url(#b3)"><path d="M28.81 6.11 C28.68 4.17 29.06 1.02 31.43 -0.58 C33.80 -2.18 36.00 -2.06 39.58 -1.16 C43.17 -0.27 44.91 0.29 47.73 3.49 C50.55 6.69 51.23 8.52 52.39 13.39 C53.54 18.25 53.48 21.51 52.97 25.61 C52.46 29.71 52.24 31.18 50.06 32.01 C47.88 32.85 45.31 31.32 43.07 29.39 C40.83 27.47 40.45 26.16 39.87 23.28 C39.30 20.40 41.09 19.12 40.45 16.30 C39.81 13.48 38.82 12.24 36.96 10.48 C35.10 8.71 33.81 9.23 32.01 8.27 C30.22 7.31 28.94 8.06 28.81 6.11Z" fill="#4a675d"/><path d="M41.91 15.13 C41.97 12.70 43.80 12.76 44.82 14.55 C45.84 16.34 46.63 20.85 46.57 23.28 C46.50 25.72 45.55 27.40 44.53 25.61 C43.50 23.82 41.85 17.57 41.91 15.13Z" fill="#a8c0bb" opacity="0.75"/><path d="M37.25 5.82 C37.38 4.67 39.46 4.99 40.75 6.40 C42.03 7.81 43.20 11.07 43.07 12.22 C42.95 13.38 41.44 13.05 40.16 11.64 C38.88 10.23 37.12 6.97 37.25 5.82Z" fill="#7f9b92" opacity="0.7"/><path d="M46.57 10.48 C47.14 10.22 48.51 12.96 48.89 15.13 C49.28 17.31 48.89 20.12 48.31 20.37 C47.74 20.63 46.66 18.47 46.27 16.30 C45.89 14.12 45.99 10.73 46.57 10.48Z" fill="#2f4a42" opacity="0.8"/><path d="M32.60 2.33 C32.98 1.50 35.06 1.23 36.09 1.75 C37.11 2.26 37.64 3.82 37.25 4.66 C36.87 5.49 35.37 6.04 34.34 5.53 C33.32 5.02 32.21 3.16 32.60 2.33Z" fill="#2f4a42" opacity="0.7"/><path d="M-0.29 25.61 C0.48 24.33 2.54 26.92 4.66 27.94 C6.77 28.96 7.39 28.99 9.31 30.27 C11.23 31.55 11.08 32.22 13.39 33.76 C15.69 35.30 18.89 35.72 19.79 37.25 C20.69 38.79 19.25 38.95 17.46 40.75 C15.67 42.54 14.20 45.27 11.64 45.40 C9.08 45.53 8.13 43.89 5.82 41.33 C3.52 38.77 2.51 37.22 1.16 33.76 C-0.18 30.30 -1.06 26.89 -0.29 25.61Z" fill="#cdbd4e"/><path d="M4.07 22.12 C4.91 20.97 6.39 19.86 7.57 20.37 C8.75 20.88 9.69 23.04 9.43 24.45 C9.17 25.86 7.64 26.52 6.40 26.78 C5.16 27.03 4.30 26.64 3.78 25.61 C3.27 24.59 3.24 23.27 4.07 22.12Z" fill="#33503a"/><path d="M1.16 27.94 C2.06 27.43 4.03 28.99 5.82 30.27 C7.61 31.55 9.31 32.74 9.31 33.76 C9.31 34.78 7.49 35.18 5.82 34.92 C4.16 34.67 2.77 34.13 1.75 32.60 C0.72 31.06 0.27 28.45 1.16 27.94Z" fill="#e3d877" opacity="0.8"/><path d="M6.98 39.58 C7.75 38.43 10.10 37.65 11.64 38.42 C13.18 39.19 13.97 41.47 13.97 43.07 C13.97 44.67 12.92 45.56 11.64 45.69 C10.36 45.82 9.17 45.00 8.15 43.66 C7.12 42.31 6.22 40.73 6.98 39.58Z" fill="#20261f"/><path d="M12.81 46.27 C12.68 43.78 16.97 40.40 19.79 38.42 C22.61 36.43 23.31 36.36 25.61 37.25 C27.92 38.15 27.96 42.75 30.27 42.49 C32.57 42.24 34.30 38.78 36.09 36.09 C37.88 33.40 35.54 31.27 38.42 30.27 C41.30 29.27 47.39 29.50 49.19 31.55 C50.98 33.60 48.93 36.08 46.57 39.58 C44.20 43.08 42.26 45.07 38.42 47.44 C34.58 49.81 33.07 49.84 29.10 50.35 C25.13 50.86 23.96 50.66 20.37 49.77 C16.79 48.87 12.93 48.77 12.81 46.27Z" fill="#f0eeef"/><path d="M25.03 29.10 C27.08 27.05 32.21 27.43 34.92 27.94 C37.64 28.45 37.37 29.38 37.37 31.43 C37.37 33.48 36.49 34.92 34.92 37.25 C33.36 39.58 32.32 42.03 30.27 42.03 C28.22 42.03 26.76 40.10 25.61 37.25 C24.46 34.41 22.98 31.15 25.03 29.10Z" fill="#e2b8a2"/><path d="M13.39 20.95 C13.13 17.88 13.40 17.57 14.55 15.13 C15.70 12.70 16.71 11.50 18.63 9.90 C20.55 8.29 20.98 8.24 23.28 7.86 C25.59 7.47 27.29 7.57 29.10 8.15 C30.92 8.73 32.06 9.97 31.55 10.48 C31.04 10.99 28.59 9.97 26.78 10.48 C24.96 10.99 24.44 11.27 23.28 12.81 C22.13 14.34 21.79 15.16 21.54 17.46 C21.28 19.77 21.48 20.98 22.12 23.28 C22.76 25.59 23.42 26.40 24.45 27.94 C25.47 29.48 26.78 28.71 26.78 30.27 C26.78 31.83 25.98 34.27 24.45 35.04 C22.91 35.81 21.71 35.07 19.79 33.76 C17.87 32.45 17.12 31.92 15.72 29.10 C14.31 26.29 13.64 24.03 13.39 20.95Z" fill="#6c4c3e"/><path d="M12.81 16.30 C13.19 13.35 14.37 11.97 15.13 12.22 C15.90 12.48 16.43 15.03 16.30 17.46 C16.17 19.90 15.19 21.49 14.55 23.28 C13.91 25.08 13.77 27.15 13.39 25.61 C13.00 24.07 12.42 19.24 12.81 16.30Z" fill="#d8b8a4" opacity="0.7"/><path d="M22.70 12.81 C23.34 10.37 24.85 10.41 26.78 9.90 C28.70 9.38 29.64 9.58 31.43 10.48 C33.22 11.37 33.62 12.18 34.92 13.97 C36.23 15.76 36.98 16.58 37.37 18.63 C37.75 20.68 37.98 22.51 36.67 23.28 C35.36 24.05 33.61 21.86 31.43 22.12 C29.25 22.37 28.44 24.70 26.78 24.45 C25.11 24.19 24.76 23.52 23.86 20.95 C22.97 18.39 22.06 15.24 22.70 12.81Z" fill="#dfb5a0"/><path d="M23.28 22.12 C23.80 21.48 24.98 24.12 26.78 23.86 C28.57 23.61 29.10 21.34 31.43 20.95 C33.76 20.57 36.19 21.09 37.37 22.12 C38.55 23.14 37.84 24.05 36.79 25.61 C35.74 27.17 34.80 28.30 32.60 29.22 C30.39 30.14 28.57 30.34 26.78 29.80 C24.98 29.26 25.22 28.47 24.45 26.78 C23.68 25.08 22.77 22.76 23.28 22.12Z" fill="#2d2220"/><path d="M24.45 13.39 C24.77 12.88 26.07 12.39 26.78 12.51 C27.48 12.64 27.97 13.46 27.65 13.97 C27.33 14.48 26.02 14.97 25.32 14.84 C24.62 14.71 24.13 13.90 24.45 13.39Z" fill="#2a1f1c"/><path d="M30.27 11.64 C30.65 11.30 31.98 11.12 32.60 11.35 C33.21 11.58 33.45 12.34 33.06 12.69 C32.68 13.03 31.46 13.15 30.85 12.92 C30.24 12.69 29.88 11.99 30.27 11.64Z" fill="#3a2a26"/><path d="M29.10 19.21 C29.23 18.44 31.32 17.59 32.60 17.46 C33.88 17.33 35.05 17.86 34.92 18.63 C34.80 19.39 33.29 20.83 32.01 20.95 C30.73 21.08 28.98 19.98 29.10 19.21Z" fill="#c98c7c" opacity="0.8"/></g></g></svg></div>
<span id="nm3" class="t nm" style="left:391.33px;top:496.8px;letter-spacing:0.114px;">Jay French</span>
<span id="cl3" class="t cl" style="left:390.96px;top:518.61px;letter-spacing:0.439px;">5A</span>
<span id="id3" class="t td sid" style="left:747.21px;top:506.8px;letter-spacing:0.7px;">1234567890</span>
<span id="gr3" class="t td gr" style="left:948.1px;top:506.8px;transform:scaleX(1.1);transform-origin:0 0;">5</span>
<span id="phn3" class="t td phn" style="left:1050.86px;top:506.8px;letter-spacing:0.638px;">1234567890</span>
<span id="ad3" class="t td ad" style="left:1251.17px;top:506.8px;letter-spacing:0.394px;">123 Main St, Anytown, USA</span>
<div class="abs btn" style="left:1682px;top:497px;background:#c3ebfa"><svg width="35" height="35" viewBox="0 0 35 35" fill="none" stroke="#f2fbff" stroke-width="1.5" style="display:block"><path d="M7.7 18 C11.5 9.8 22.7 9.8 26.5 18 C22.7 26.2 11.5 26.2 7.7 18 Z" stroke-linejoin="round"/><circle cx="17.1" cy="18" r="3.7" fill="#b5e6ec" fill-opacity="0.4"/></svg></div>
<div class="abs btn" style="left:1727px;top:497px;background:#cfceff"><svg width="35" height="35" viewBox="0 0 35 35" fill="none" stroke="#f6f5ff" stroke-width="1.6" style="display:block"><path d="M7.6 12.4 H26.2" stroke-width="1.5"/><path d="M13.2 12.2 V10.3 a1.6 1.6 0 0 1 1.6 -1.6 H19.2 a1.6 1.6 0 0 1 1.6 1.6 V12.2"/><path d="M14.6 10.5 H19.4" stroke-width="1.2" stroke="#e4e2ff"/><path d="M9.8 14.5 V23.9 a3.4 3.4 0 0 0 3.4 3.4 H20.8 a3.4 3.4 0 0 0 3.4 -3.4 V14.5"/><path d="M15 15.4 V22.8 M19 15.4 V22.8" stroke-width="1.6"/></svg></div>
<div class="abs row" style="top:561px"></div>
<div class="abs" style="left:321px;top:581px;width:50px;height:50px"><svg width="50" height="50" viewBox="0 0 50 50" style="display:block"><defs><clipPath id="c4"><circle cx="25" cy="25" r="25"/></clipPath><filter id="b4" x="-20%" y="-20%" width="140%" height="140%"><feGaussianBlur stdDeviation="0.55"/></filter><linearGradient id="g4" x1="0" y1="0" x2="0" y2="1"><stop offset="0" stop-color="#a6d7ea"/><stop offset="0.25" stop-color="#cfe8f0"/><stop offset="0.42" stop-color="#dbeef2"/><stop offset="0.47" stop-color="#6bbdd3"/><stop offset="0.52" stop-color="#55b1cc"/><stop offset="0.6" stop-color="#8acadb"/><stop offset="0.66" stop-color="#e9ddd7"/><stop offset="1" stop-color="#f3ece7"/></linearGradient></defs><g clip-path="url(#c4)"><rect width="50" height="50" fill="url(#g4)"/><g filter="url(#b4)"><path d="M1.75 34.92 C1.49 31.47 5.59 29.62 8.15 29.10 C10.71 28.59 11.53 29.39 13.39 32.60 C15.24 35.80 17.49 40.97 16.59 43.66 C15.69 46.34 12.58 46.74 9.31 44.82 C6.05 42.90 2.00 38.38 1.75 34.92Z" fill="#f4e5dc"/><path d="M5.82 33.76 C5.95 30.94 7.58 28.80 8.73 30.85 C9.88 32.90 11.19 40.26 11.06 43.07 C10.93 45.89 9.30 45.70 8.15 43.66 C7.00 41.61 5.69 36.58 5.82 33.76Z" fill="#f7d9cf" opacity="0.8"/><path d="M15.13 25.61 C14.88 24.84 15.27 20.79 16.30 17.46 C17.32 14.13 17.74 12.59 19.79 10.48 C21.84 8.36 22.79 8.24 25.61 7.86 C28.43 7.47 30.03 7.77 32.60 8.73 C35.16 9.69 35.72 10.30 37.25 12.22 C38.79 14.14 38.81 14.52 39.58 17.46 C40.35 20.41 40.10 22.28 40.75 25.61 C41.39 28.94 41.31 29.91 42.49 32.60 C43.67 35.29 46.48 34.95 46.10 37.83 C45.72 40.72 43.84 43.32 40.75 45.69 C37.65 48.06 34.06 51.23 32.01 48.60 C29.97 45.98 30.28 38.82 31.43 33.76 C32.58 28.70 36.48 29.45 37.25 25.61 C38.02 21.77 37.23 19.24 34.92 16.30 C32.62 13.35 30.10 12.48 26.78 12.22 C23.45 11.97 21.84 13.21 19.79 15.13 C17.74 17.05 18.49 18.65 17.46 20.95 C16.44 23.26 15.39 26.38 15.13 25.61Z" fill="#2a2528"/><path d="M10.48 45.69 C10.73 44.35 15.03 44.42 17.46 43.07 C19.90 41.73 19.49 39.94 21.54 39.58 C23.59 39.22 24.60 41.44 26.78 41.44 C28.95 41.44 30.25 38.01 31.43 39.58 C32.61 41.16 33.67 46.17 32.13 48.60 C30.59 51.04 27.93 50.51 24.45 50.64 C20.96 50.77 19.37 50.27 16.30 49.19 C13.22 48.10 10.22 47.04 10.48 45.69Z" fill="#b98a82"/><path d="M17.46 20.95 C18.36 18.39 17.74 17.05 19.79 15.13 C21.84 13.21 23.45 11.97 26.78 12.22 C30.10 12.48 32.59 13.86 34.92 16.30 C37.25 18.73 36.96 19.95 37.37 23.28 C37.78 26.61 37.84 28.08 36.79 31.43 C35.74 34.79 34.80 36.33 32.60 38.53 C30.39 40.74 29.21 41.32 26.78 41.44 C24.34 41.57 23.59 41.06 21.54 39.12 C19.49 37.17 18.74 35.31 17.46 32.60 C16.18 29.88 15.72 29.34 15.72 26.78 C15.72 24.21 16.57 23.52 17.46 20.95Z" fill="#c8958a"/><path d="M18.63 16.30 C20.29 14.89 23.32 13.26 26.78 13.39 C30.23 13.52 32.55 15.34 34.34 16.88 C36.14 18.42 36.59 20.24 34.92 20.37 C33.26 20.50 30.23 17.59 26.78 17.46 C23.32 17.33 21.00 20.05 19.21 19.79 C17.42 19.53 16.96 17.71 18.63 16.30Z" fill="#b98378" opacity="0.7"/><path d="M17.93 22.99 C18.41 22.51 19.19 22.16 20.37 22.12 C21.55 22.08 22.67 22.31 23.28 22.82 C23.90 23.33 23.81 24.02 23.17 24.45 C22.53 24.87 21.47 24.76 20.37 24.74 C19.27 24.71 18.70 24.71 18.16 24.33 C17.62 23.95 17.44 23.48 17.93 22.99Z" fill="#3a2c2e"/><path d="M28.52 24.56 C29.10 24.05 30.13 23.71 31.43 23.75 C32.74 23.79 33.84 24.17 34.46 24.74 C35.07 25.30 34.89 25.93 34.23 26.31 C33.56 26.69 32.62 26.54 31.43 26.48 C30.24 26.43 29.45 26.50 28.81 26.08 C28.17 25.65 27.95 25.08 28.52 24.56Z" fill="#3a2c2e"/><ellipse cx="31.43" cy="30.27" rx="2.91" ry="2.33" fill="#e49a9a" opacity="0.6"/><path d="M19.09 32.60 C19.60 32.15 22.22 33.66 24.45 33.76 C26.68 33.86 28.64 32.65 29.22 33.06 C29.80 33.47 28.63 35.02 27.07 35.62 C25.50 36.22 23.87 36.46 22.12 35.80 C20.36 35.13 18.58 33.04 19.09 32.60Z" fill="#e9f7f5"/><path d="M19.79 9.02 C21.78 8.60 24.69 7.79 29.10 8.27 C33.52 8.74 37.57 10.31 39.87 11.18 C42.18 12.05 41.95 12.57 39.58 12.22 C37.21 11.88 33.39 10.05 29.10 9.60 C24.81 9.16 22.13 10.31 20.08 10.19 C18.03 10.06 17.81 9.44 19.79 9.02Z" fill="#86ccd6" opacity="0.9"/></g></g></svg></div>
<span id="nm4" class="t nm" style="left:391.65px;top:587.8px;letter-spacing:0.103px;">Jane Smith</span>
<span id="cl4" class="t cl" style="left:390.96px;top:609.61px;letter-spacing:0.398px;">5A</span>
<span id="id4" class="t td sid" style="left:747.14px;top:597.8px;letter-spacing:0.702px;">1234567890</span>
<span id="gr4" class="t td gr" style="left:948.1px;top:597.8px;transform:scaleX(1.1);transform-origin:0 0;">5</span>
<span id="phn4" class="t td phn" style="left:1050.86px;top:597.8px;letter-spacing:0.636px;">1234567890</span>
<span id="ad4" class="t td ad" style="left:1251.13px;top:597.8px;letter-spacing:0.401px;">123 Main St, Anytown, USA</span>
<div class="abs btn" style="left:1682px;top:588px;background:#c3ebfa"><svg width="35" height="35" viewBox="0 0 35 35" fill="none" stroke="#f2fbff" stroke-width="1.5" style="display:block"><path d="M7.7 18 C11.5 9.8 22.7 9.8 26.5 18 C22.7 26.2 11.5 26.2 7.7 18 Z" stroke-linejoin="round"/><circle cx="17.1" cy="18" r="3.7" fill="#b5e6ec" fill-opacity="0.4"/></svg></div>
<div class="abs btn" style="left:1727px;top:588px;background:#cfceff"><svg width="35" height="35" viewBox="0 0 35 35" fill="none" stroke="#f6f5ff" stroke-width="1.6" style="display:block"><path d="M7.6 12.4 H26.2" stroke-width="1.5"/><path d="M13.2 12.2 V10.3 a1.6 1.6 0 0 1 1.6 -1.6 H19.2 a1.6 1.6 0 0 1 1.6 1.6 V12.2"/><path d="M14.6 10.5 H19.4" stroke-width="1.2" stroke="#e4e2ff"/><path d="M9.8 14.5 V23.9 a3.4 3.4 0 0 0 3.4 3.4 H20.8 a3.4 3.4 0 0 0 3.4 -3.4 V14.5"/><path d="M15 15.4 V22.8 M19 15.4 V22.8" stroke-width="1.6"/></svg></div>
<div class="abs row ev" style="top:652px"></div>
<div class="abs" style="left:321px;top:672px;width:50px;height:50px"><svg width="50" height="50" viewBox="0 0 50 50" style="display:block"><defs><clipPath id="c5"><circle cx="25" cy="25" r="25"/></clipPath><filter id="b5" x="-20%" y="-20%" width="140%" height="140%"><feGaussianBlur stdDeviation="0.55"/></filter><linearGradient id="g5" x1="0" y1="0" x2="0" y2="1"><stop offset="0" stop-color="#6f7d7c"/><stop offset="0.2" stop-color="#93a391"/><stop offset="0.32" stop-color="#a9b98a"/><stop offset="0.45" stop-color="#c4a66d"/><stop offset="0.6" stop-color="#d6917c"/><stop offset="0.75" stop-color="#d2a99b"/><stop offset="1" stop-color="#c9b8ad"/></linearGradient></defs><g clip-path="url(#c5)"><rect width="50" height="50" fill="url(#g5)"/><g filter="url(#b5)"><path d="M5.82 7.57 C6.85 5.90 11.08 4.02 13.39 4.66 C15.69 5.30 17.32 8.81 16.30 10.48 C15.27 12.14 11.04 12.86 8.73 12.22 C6.43 11.58 4.80 9.23 5.82 7.57Z" fill="#6d8f9a" opacity="0.8"/><path d="M17.46 0.29 C19.64 -1.95 24.98 -1.95 26.78 0.29 C28.57 2.53 26.64 6.70 25.61 10.48 C24.59 14.25 23.66 14.58 22.12 17.46 C20.58 20.34 20.36 22.49 18.63 23.57 C16.90 24.66 14.64 25.29 14.26 22.41 C13.88 19.53 16.18 15.34 16.88 10.48 C17.58 5.61 15.29 2.53 17.46 0.29Z" fill="#8b8993"/><path d="M43.66 12.22 C45.13 9.28 48.88 7.49 50.35 12.22 C51.82 16.96 51.44 28.51 50.35 33.76 C49.26 39.01 46.87 37.88 45.40 36.09 C43.93 34.30 44.04 30.86 43.66 25.61 C43.27 20.36 42.18 15.17 43.66 12.22Z" fill="#8eae5a"/><path d="M14.55 48.02 C13.40 44.37 14.24 38.31 15.13 33.76 C16.03 29.21 16.58 29.15 18.63 27.36 C20.68 25.56 22.14 24.97 24.45 25.61 C26.75 26.25 27.31 27.71 29.10 30.27 C30.90 32.83 31.06 33.92 32.60 37.25 C34.13 40.58 36.86 42.52 36.09 45.40 C35.32 48.28 32.56 49.26 29.10 50.35 C25.65 51.44 23.57 50.86 20.37 50.35 C17.17 49.84 15.70 51.67 14.55 48.02Z" fill="#dbb8a7"/><path d="M12.22 44.53 C12.15 42.80 13.96 38.94 14.55 39.58 C15.14 40.22 15.41 46.35 14.90 47.44 C14.39 48.53 12.30 46.26 12.22 44.53Z" fill="#2a2224"/><path d="M25.03 27.94 C25.13 24.69 26.11 24.62 26.78 27.82 C27.44 31.02 28.16 39.24 28.06 42.49 C27.95 45.74 26.98 45.81 26.31 42.61 C25.64 39.41 24.93 31.19 25.03 27.94Z" fill="#5e4640"/><path d="M26.78 4.66 C27.80 2.74 29.78 2.00 32.60 1.75 C35.41 1.49 37.12 1.83 39.58 3.49 C42.04 5.16 42.98 6.24 43.77 9.31 C44.57 12.39 43.86 14.13 43.19 17.46 C42.52 20.79 42.05 22.63 40.75 24.45 C39.44 26.27 39.30 25.70 37.25 25.73 C35.20 25.75 34.25 24.56 31.43 24.56 C28.61 24.56 27.01 25.47 24.45 25.73 C21.89 25.98 19.79 27.55 19.79 25.73 C19.79 23.91 22.65 20.82 24.45 17.46 C26.24 14.11 27.43 13.29 27.94 10.48 C28.45 7.66 25.75 6.58 26.78 4.66Z" fill="#8a5b45"/><path d="M19.79 25.73 C19.79 24.51 22.40 22.13 24.45 20.95 C26.50 19.78 27.82 19.35 29.10 20.37 C30.38 21.40 31.29 24.27 30.27 25.61 C29.24 26.96 26.75 26.46 24.45 26.48 C22.14 26.51 19.79 26.94 19.79 25.73Z" fill="#9a6a50" opacity="0.9"/><path d="M26.78 25.73 C27.54 24.32 30.03 24.15 32.60 23.86 C35.16 23.58 36.09 23.55 38.42 24.45 C40.75 25.34 41.50 25.12 43.19 27.94 C44.88 30.76 46.64 33.60 46.10 37.25 C45.56 40.90 42.95 42.71 40.75 44.53 C38.54 46.35 37.88 47.12 36.09 45.52 C34.30 43.92 34.13 40.61 32.60 37.25 C31.06 33.90 30.38 32.80 29.10 30.27 C27.82 27.73 26.01 27.14 26.78 25.73Z" fill="#c4643e"/><path d="M34.92 29.10 C35.05 27.05 38.82 28.47 40.75 30.27 C42.67 32.06 43.78 35.20 43.66 37.25 C43.53 39.30 42.08 41.37 40.16 39.58 C38.24 37.79 34.80 31.15 34.92 29.10Z" fill="#a8502f" opacity="0.6"/><path d="M31.43 10.48 C32.33 8.30 33.00 7.04 34.92 6.40 C36.85 5.76 38.60 6.16 40.16 7.57 C41.73 8.98 41.90 10.24 42.03 12.81 C42.15 15.37 41.92 16.88 40.75 19.21 C39.57 21.54 38.46 23.02 36.67 23.40 C34.88 23.78 33.88 22.52 32.60 20.95 C31.32 19.39 31.11 18.60 30.85 16.30 C30.59 13.99 30.54 12.65 31.43 10.48Z" fill="#e2b7a2"/><path d="M33.29 17.46 C34.19 16.95 37.48 16.76 38.42 17.17 C39.35 17.58 38.44 18.81 37.54 19.32 C36.65 19.84 35.28 19.91 34.34 19.50 C33.41 19.09 32.40 17.97 33.29 17.46Z" fill="#f6e8e2"/><path d="M32.60 12.22 C33.12 11.86 34.60 11.57 35.22 11.76 C35.83 11.95 35.92 12.74 35.39 13.10 C34.86 13.46 33.44 13.58 32.83 13.39 C32.21 13.20 32.07 12.58 32.60 12.22Z" fill="#4a3028"/><path d="M37.54 11.76 C38.08 11.50 39.59 11.60 40.16 11.93 C40.74 12.27 40.70 13.02 40.16 13.27 C39.63 13.53 38.29 13.43 37.72 13.10 C37.14 12.76 37.01 12.01 37.54 11.76Z" fill="#4a3028"/></g></g></svg></div>
<span id="nm5" class="t nm" style="left:391.48px;top:678.8px;letter-spacing:0.03px;">Anna Santiago</span>
<span id="cl5" class="t cl" style="left:390.96px;top:700.61px;letter-spacing:0.439px;">5A</span>
<span id="id5" class="t td sid" style="left:747.21px;top:688.8px;letter-spacing:0.7px;">1234567890</span>
<span id="gr5" class="t td gr" style="left:948.1px;top:688.8px;transform:scaleX(1.1);transform-origin:0 0;">5</span>
<span id="phn5" class="t td phn" style="left:1050.86px;top:688.8px;letter-spacing:0.638px;">1234567890</span>
<span id="ad5" class="t td ad" style="left:1251.17px;top:688.8px;letter-spacing:0.394px;">123 Main St, Anytown, USA</span>
<div class="abs btn" style="left:1682px;top:679px;background:#c3ebfa"><svg width="35" height="35" viewBox="0 0 35 35" fill="none" stroke="#f2fbff" stroke-width="1.5" style="display:block"><path d="M7.7 18 C11.5 9.8 22.7 9.8 26.5 18 C22.7 26.2 11.5 26.2 7.7 18 Z" stroke-linejoin="round"/><circle cx="17.1" cy="18" r="3.7" fill="#b5e6ec" fill-opacity="0.4"/></svg></div>
<div class="abs btn" style="left:1727px;top:679px;background:#cfceff"><svg width="35" height="35" viewBox="0 0 35 35" fill="none" stroke="#f6f5ff" stroke-width="1.6" style="display:block"><path d="M7.6 12.4 H26.2" stroke-width="1.5"/><path d="M13.2 12.2 V10.3 a1.6 1.6 0 0 1 1.6 -1.6 H19.2 a1.6 1.6 0 0 1 1.6 1.6 V12.2"/><path d="M14.6 10.5 H19.4" stroke-width="1.2" stroke="#e4e2ff"/><path d="M9.8 14.5 V23.9 a3.4 3.4 0 0 0 3.4 3.4 H20.8 a3.4 3.4 0 0 0 3.4 -3.4 V14.5"/><path d="M15 15.4 V22.8 M19 15.4 V22.8" stroke-width="1.6"/></svg></div>
<div class="abs row" style="top:743px"></div>
<div class="abs" style="left:321px;top:763px;width:50px;height:50px"><svg width="50" height="50" viewBox="0 0 50 50" style="display:block"><defs><clipPath id="c6"><circle cx="25" cy="25" r="25"/></clipPath><filter id="b6" x="-20%" y="-20%" width="140%" height="140%"><feGaussianBlur stdDeviation="0.55"/></filter><linearGradient id="g6" x1="0" y1="0" x2="1" y2="0"><stop offset="0" stop-color="#2f3433"/><stop offset="0.2" stop-color="#4a4646"/><stop offset="0.4" stop-color="#545053"/><stop offset="0.6" stop-color="#4f5b60"/><stop offset="0.8" stop-color="#46565e"/><stop offset="0.93" stop-color="#574840"/><stop offset="1" stop-color="#5d463b"/></linearGradient></defs><g clip-path="url(#c6)"><rect width="50" height="50" fill="url(#g6)"/><g filter="url(#b6)"><rect x="18.63" y="0.00" width="3.03" height="17.46" fill="#93a7b6"/><rect x="27.36" y="0.00" width="3.61" height="34.92" fill="#a3b4c1"/><rect x="41.91" y="7.57" width="3.03" height="18.63" fill="#7f95a7"/><rect x="22.12" y="0.00" width="4.66" height="5.24" fill="#2a1d19"/><path d="M8.73 7.57 C10.52 4.49 15.41 1.57 17.46 3.49 C19.51 5.41 19.84 13.22 18.04 16.30 C16.25 19.37 11.36 19.38 9.31 17.46 C7.26 15.54 6.94 10.64 8.73 7.57Z" fill="#5a5258" opacity="0.8"/><path d="M31.43 7.57 C32.97 5.26 37.53 3.38 39.58 4.66 C41.63 5.94 42.28 11.08 40.75 13.39 C39.21 15.69 34.64 16.41 32.60 15.13 C30.55 13.85 29.90 9.87 31.43 7.57Z" fill="#3c4a48" opacity="0.9"/><path d="M30.85 14.84 C31.62 13.82 32.88 13.32 34.92 13.39 C36.97 13.45 38.88 14.11 40.16 15.13 C41.44 16.16 42.67 17.40 40.75 18.04 C38.82 18.68 33.61 18.75 31.43 18.04 C29.25 17.34 30.08 15.87 30.85 14.84Z" fill="#4e6d7b"/><path d="M30.85 17.46 C32.90 12.72 38.29 14.62 40.75 16.41 C43.20 18.21 43.31 20.51 42.03 25.61 C40.75 30.71 37.25 36.87 34.92 39.58 C32.59 42.30 32.33 42.82 31.43 37.95 C30.54 33.08 28.80 22.20 30.85 17.46Z" fill="#2b2c2b"/><path d="M2.91 27.94 C2.65 25.76 3.25 23.26 4.66 20.95 C6.07 18.65 6.75 18.23 9.31 17.46 C11.87 16.69 13.99 16.18 16.30 17.46 C18.60 18.74 18.00 21.49 19.79 23.28 C21.58 25.08 22.65 24.33 24.45 25.61 C26.24 26.89 26.89 27.05 27.94 29.10 C28.99 31.15 29.48 32.85 29.22 34.92 C28.96 37.00 29.36 37.74 26.78 38.53 C24.19 39.33 21.30 38.79 17.46 38.53 C13.62 38.28 11.87 39.06 9.31 37.37 C6.75 35.68 7.23 32.92 5.82 30.85 C4.41 28.78 3.17 30.12 2.91 27.94Z" fill="#1e2f57"/><path d="M16.30 17.46 C17.07 16.18 20.04 15.66 22.12 16.30 C24.19 16.94 25.73 18.30 25.73 20.37 C25.73 22.45 23.68 25.34 22.12 25.73 C20.56 26.11 19.91 23.94 18.63 22.12 C17.35 20.30 15.53 18.74 16.30 17.46Z" fill="#b08a70"/><path d="M22.12 13.97 C22.50 12.43 22.91 11.50 24.45 10.48 C25.98 9.45 27.29 9.19 29.10 9.31 C30.92 9.44 32.05 9.52 32.71 11.06 C33.38 12.60 32.92 14.61 32.13 16.30 C31.34 17.99 30.54 17.95 29.10 18.74 C27.67 19.54 27.02 20.19 25.61 19.91 C24.20 19.63 23.47 18.77 22.70 17.46 C21.93 16.16 21.73 15.51 22.12 13.97Z" fill="#b88f74"/><path d="M26.78 12.22 C27.74 11.90 30.41 12.10 31.43 12.51 C32.46 12.92 32.39 13.77 31.43 14.09 C30.47 14.41 28.09 14.38 27.07 13.97 C26.04 13.56 25.81 12.54 26.78 12.22Z" fill="#3c4a3e" opacity="0.8"/><path d="M19.79 12.22 C19.66 10.79 20.00 9.23 21.54 7.57 C23.07 5.90 24.60 4.91 26.78 4.66 C28.95 4.40 30.00 5.12 31.43 6.40 C32.87 7.68 33.81 9.84 33.29 10.48 C32.78 11.12 31.05 9.31 29.10 9.31 C27.16 9.31 25.98 9.43 24.45 10.48 C22.91 11.53 23.14 13.70 22.12 14.09 C21.09 14.47 19.92 13.66 19.79 12.22Z" fill="#a8825a"/><path d="M2.33 29.10 C2.33 27.16 4.28 29.03 5.82 30.85 C7.36 32.67 6.50 35.42 9.31 37.37 C12.13 39.32 14.78 39.44 18.63 39.70 C22.47 39.95 23.93 38.92 26.78 38.53 C29.62 38.15 30.50 37.69 31.55 37.95 C32.60 38.21 33.62 38.80 31.55 39.70 C29.47 40.59 26.50 41.39 22.12 42.03 C17.74 42.67 15.23 43.12 11.64 42.61 C8.06 42.10 7.87 42.67 5.82 39.70 C3.77 36.73 2.33 31.05 2.33 29.10Z" fill="#b98d73"/><path d="M34.92 39.70 C35.05 35.57 39.23 27.29 42.49 24.45 C45.76 21.60 48.81 23.16 49.77 26.78 C50.73 30.39 48.59 37.25 46.86 40.86 C45.13 44.47 44.53 43.45 41.91 43.19 C39.28 42.93 34.80 43.82 34.92 39.70Z" fill="#6d6973"/><path d="M21.54 41.44 C23.59 40.68 26.92 39.31 31.43 39.70 C35.94 40.08 40.75 41.91 42.03 43.19 C43.31 44.47 41.63 45.52 37.25 45.52 C32.87 45.52 25.58 44.09 22.12 43.19 C18.66 42.29 19.49 42.21 21.54 41.44Z" fill="#1c1c20"/><path d="M11.06 45.69 C11.06 44.16 12.98 43.30 17.46 42.49 C21.94 41.68 27.05 41.36 31.43 42.03 C35.81 42.69 36.60 44.07 37.37 45.52 C38.14 46.97 37.25 47.48 34.92 48.60 C32.59 49.73 30.62 50.45 26.78 50.64 C22.93 50.83 20.92 50.56 17.46 49.48 C14.00 48.39 11.06 47.23 11.06 45.69Z" fill="#9dc2df"/><ellipse cx="5.82" cy="11.76" rx="0.81" ry="0.81" fill="#e3bb4a"/><ellipse cx="40.16" cy="17.17" rx="0.76" ry="0.76" fill="#dcd39a"/></g></g></svg></div>
<span id="nm6" class="t nm" style="left:391.42px;top:769.8px;letter-spacing:-0.111px;">Allen Black</span>
<span id="cl6" class="t cl" style="left:390.96px;top:791.61px;letter-spacing:0.398px;">5A</span>
<span id="id6" class="t td sid" style="left:747.14px;top:779.8px;letter-spacing:0.702px;">1234567890</span>
<span id="gr6" class="t td gr" style="left:948.1px;top:779.8px;transform:scaleX(1.1);transform-origin:0 0;">5</span>
<span id="phn6" class="t td phn" style="left:1050.86px;top:779.8px;letter-spacing:0.636px;">1234567890</span>
<span id="ad6" class="t td ad" style="left:1251.13px;top:779.8px;letter-spacing:0.401px;">123 Main St, Anytown, USA</span>
<div class="abs btn" style="left:1682px;top:770px;background:#c3ebfa"><svg width="35" height="35" viewBox="0 0 35 35" fill="none" stroke="#f2fbff" stroke-width="1.5" style="display:block"><path d="M7.7 18 C11.5 9.8 22.7 9.8 26.5 18 C22.7 26.2 11.5 26.2 7.7 18 Z" stroke-linejoin="round"/><circle cx="17.1" cy="18" r="3.7" fill="#b5e6ec" fill-opacity="0.4"/></svg></div>
<div class="abs btn" style="left:1727px;top:770px;background:#cfceff"><svg width="35" height="35" viewBox="0 0 35 35" fill="none" stroke="#f6f5ff" stroke-width="1.6" style="display:block"><path d="M7.6 12.4 H26.2" stroke-width="1.5"/><path d="M13.2 12.2 V10.3 a1.6 1.6 0 0 1 1.6 -1.6 H19.2 a1.6 1.6 0 0 1 1.6 1.6 V12.2"/><path d="M14.6 10.5 H19.4" stroke-width="1.2" stroke="#e4e2ff"/><path d="M9.8 14.5 V23.9 a3.4 3.4 0 0 0 3.4 3.4 H20.8 a3.4 3.4 0 0 0 3.4 -3.4 V14.5"/><path d="M15 15.4 V22.8 M19 15.4 V22.8" stroke-width="1.6"/></svg></div>
<div class="abs row ev" style="top:834px"></div>
<div class="abs" style="left:321px;top:854px;width:50px;height:50px"><svg width="50" height="50" viewBox="0 0 50 50" style="display:block"><defs><clipPath id="c7"><circle cx="25" cy="25" r="25"/></clipPath><filter id="b7" x="-20%" y="-20%" width="140%" height="140%"><feGaussianBlur stdDeviation="0.55"/></filter><radialGradient id="g7" cx="0.6" cy="0.3" r="0.85"><stop offset="0" stop-color="#fcc0c0"/><stop offset="0.55" stop-color="#f6a9ad"/><stop offset="1" stop-color="#ec8d96"/></radialGradient></defs><g clip-path="url(#c7)"><rect width="50" height="50" fill="url(#g7)"/><g filter="url(#b7)"><path d="M14.55 23.28 C14.17 20.72 15.40 14.45 16.30 10.48 C17.19 6.51 17.09 6.71 18.63 5.24 C20.16 3.77 21.36 3.78 23.28 3.78 C25.20 3.78 26.05 3.77 27.36 5.24 C28.66 6.71 28.55 6.76 29.22 10.48 C29.89 14.19 30.64 19.28 30.38 22.12 C30.13 24.96 28.72 24.94 28.06 23.40 C27.39 21.86 27.90 18.36 27.36 15.13 C26.82 11.91 27.02 10.27 25.61 8.73 C24.20 7.19 22.49 7.38 20.95 8.15 C19.42 8.92 19.27 9.15 18.63 12.22 C17.99 15.30 18.94 19.69 18.04 22.12 C17.15 24.55 14.94 25.84 14.55 23.28Z" fill="#6a3f33"/><path d="M11.06 36.09 C11.06 31.93 10.75 28.43 11.64 25.61 C12.54 22.79 13.34 24.05 15.13 23.28 C16.93 22.51 17.74 22.12 19.79 22.12 C21.84 22.12 22.40 23.28 24.45 23.28 C26.50 23.28 26.80 21.86 29.10 22.12 C31.41 22.37 33.11 21.37 34.92 24.45 C36.74 27.52 37.37 31.41 37.37 36.09 C37.37 40.76 36.49 42.88 34.92 45.69 C33.36 48.51 34.11 48.19 30.27 48.89 C26.43 49.60 21.56 49.85 17.46 48.89 C13.36 47.93 13.05 47.35 11.64 44.53 C10.23 41.71 11.06 40.25 11.06 36.09Z" fill="#f7d4ca"/><path d="M19.21 12.22 C19.59 10.17 19.55 8.92 20.95 8.15 C22.36 7.38 24.18 7.45 25.61 8.73 C27.05 10.01 27.19 11.79 27.47 13.97 C27.76 16.15 27.56 17.06 26.89 18.63 C26.23 20.19 25.63 20.53 24.45 21.07 C23.27 21.61 22.69 21.86 21.54 21.07 C20.38 20.28 19.72 19.41 19.21 17.46 C18.70 15.52 18.82 14.27 19.21 12.22Z" fill="#e3af99"/><path d="M20.08 13.39 C20.63 13.09 22.12 12.90 22.70 13.10 C23.28 13.29 23.25 13.97 22.70 14.26 C22.15 14.56 20.77 14.63 20.20 14.44 C19.62 14.24 19.53 13.68 20.08 13.39Z" fill="#7a4a3e" opacity="0.8"/><path d="M24.16 13.27 C24.69 13.04 26.13 13.11 26.66 13.39 C27.18 13.67 27.08 14.32 26.54 14.55 C26.00 14.78 24.74 14.72 24.21 14.44 C23.69 14.15 23.62 13.50 24.16 13.27Z" fill="#7a4a3e" opacity="0.8"/><path d="M21.25 17.75 C21.89 17.43 24.10 17.43 24.74 17.75 C25.38 18.07 24.80 18.89 24.16 19.21 C23.52 19.53 22.47 19.53 21.83 19.21 C21.19 18.89 20.61 18.07 21.25 17.75Z" fill="#d9838a" opacity="0.8"/><path d="M17.46 22.12 C18.13 20.97 18.38 20.76 19.79 20.37 C21.20 19.99 22.81 19.86 23.86 20.37 C24.92 20.88 25.20 21.91 24.56 22.70 C23.92 23.49 22.00 22.83 20.95 23.98 C19.90 25.13 20.56 26.53 19.79 27.94 C19.02 29.35 18.13 30.90 17.46 30.38 C16.80 29.87 16.76 27.43 16.76 25.61 C16.76 23.79 16.80 23.27 17.46 22.12Z" fill="#e9b9a6"/><path d="M10.48 43.36 C10.86 41.76 11.85 39.64 13.39 39.58 C14.92 39.52 14.52 42.02 17.46 43.07 C20.41 44.12 22.93 44.35 26.78 44.35 C30.62 44.35 32.85 42.78 34.92 43.07 C37.00 43.37 36.97 44.41 36.20 45.69 C35.44 46.97 35.56 48.06 31.43 48.89 C27.31 49.73 21.82 49.92 17.46 49.48 C13.11 49.03 13.18 48.20 11.64 46.86 C10.10 45.51 10.09 44.97 10.48 43.36Z" fill="#ecc0b0"/><path d="M23.17 25.61 C23.32 24.31 24.13 24.59 24.56 25.61 C25.00 26.64 25.30 28.96 25.15 30.27 C24.99 31.57 24.30 32.57 23.86 31.55 C23.43 30.52 23.01 26.92 23.17 25.61Z" fill="#a89048"/></g></g></svg></div>
<span id="nm7" class="t nm" style="left:391.33px;top:860.8px;letter-spacing:0.025px;">Ophelia Castro</span>
<span id="cl7" class="t cl" style="left:390.96px;top:882.61px;letter-spacing:0.439px;">5A</span>
<span id="id7" class="t td sid" style="left:747.21px;top:870.8px;letter-spacing:0.7px;">1234567890</span>
<span id="gr7" class="t td gr" style="left:948.1px;top:870.8px;transform:scaleX(1.1);transform-origin:0 0;">5</span>
<span id="phn7" class="t td phn" style="left:1050.86px;top:870.8px;letter-spacing:0.638px;">1234567890</span>
<span id="ad7" class="t td ad" style="left:1251.17px;top:870.8px;letter-spacing:0.394px;">123 Main St, Anytown, USA</span>
<div class="abs btn" style="left:1682px;top:861px;background:#c3ebfa"><svg width="35" height="35" viewBox="0 0 35 35" fill="none" stroke="#f2fbff" stroke-width="1.5" style="display:block"><path d="M7.7 18 C11.5 9.8 22.7 9.8 26.5 18 C22.7 26.2 11.5 26.2 7.7 18 Z" stroke-linejoin="round"/><circle cx="17.1" cy="18" r="3.7" fill="#b5e6ec" fill-opacity="0.4"/></svg></div>
<div class="abs btn" style="left:1727px;top:861px;background:#cfceff"><svg width="35" height="35" viewBox="0 0 35 35" fill="none" stroke="#f6f5ff" stroke-width="1.6" style="display:block"><path d="M7.6 12.4 H26.2" stroke-width="1.5"/><path d="M13.2 12.2 V10.3 a1.6 1.6 0 0 1 1.6 -1.6 H19.2 a1.6 1.6 0 0 1 1.6 1.6 V12.2"/><path d="M14.6 10.5 H19.4" stroke-width="1.2" stroke="#e4e2ff"/><path d="M9.8 14.5 V23.9 a3.4 3.4 0 0 0 3.4 3.4 H20.8 a3.4 3.4 0 0 0 3.4 -3.4 V14.5"/><path d="M15 15.4 V22.8 M19 15.4 V22.8" stroke-width="1.6"/></svg></div>
<div class="abs row" style="top:925px"></div>
<div class="abs" style="left:321px;top:945px;width:50px;height:50px"><svg width="50" height="50" viewBox="0 0 50 50" style="display:block"><defs><clipPath id="c8"><circle cx="25" cy="25" r="25"/></clipPath><filter id="b8" x="-20%" y="-20%" width="140%" height="140%"><feGaussianBlur stdDeviation="0.55"/></filter><linearGradient id="g8" x1="0" y1="0" x2="1" y2="0.2"><stop offset="0" stop-color="#848484"/><stop offset="0.5" stop-color="#a6a6a6"/><stop offset="1" stop-color="#b8b8b8"/></linearGradient><linearGradient id="h8" x1="0" y1="0.3" x2="1" y2="0"><stop offset="0" stop-color="#9a9a9a"/><stop offset="0.45" stop-color="#cfcfcf"/><stop offset="1" stop-color="#c2c2c2"/></linearGradient></defs><g clip-path="url(#c8)"><rect width="50" height="50" fill="url(#g8)"/><g filter="url(#b8)"><path d="M1.16 31.43 C0.91 28.42 4.28 29.66 5.82 29.69 C7.36 29.71 6.87 29.37 8.15 31.55 C9.43 33.73 9.85 36.53 11.64 39.58 C13.43 42.63 15.91 43.29 16.30 45.40 C16.68 47.51 15.44 49.63 13.39 49.19 C11.34 48.74 9.67 47.27 6.98 43.36 C4.30 39.46 1.42 34.44 1.16 31.43Z" fill="#141414"/><g fill="url(#h8)"><path d="M14.55 12.22 C14.81 8.38 14.44 7.09 15.72 4.66 C17.00 2.22 17.94 2.12 20.37 1.16 C22.81 0.20 23.83 0.16 26.78 0.29 C29.72 0.42 31.07 0.53 33.76 1.75 C36.45 2.96 37.56 3.52 39.00 5.82 C40.43 8.13 40.00 9.02 40.28 12.22 C40.56 15.42 40.69 16.92 40.28 20.37 C39.87 23.83 39.59 25.74 38.42 27.94 C37.24 30.14 37.49 30.90 34.92 30.38 C32.36 29.87 30.36 26.66 26.78 25.61 C23.19 24.56 21.32 26.38 18.63 25.61 C15.94 24.84 15.45 25.06 14.55 22.12 C13.66 19.17 14.30 16.07 14.55 12.22Z" fill="url(#h8)"/></g><path d="M13.39 10.48 C13.52 6.38 13.76 5.41 14.55 3.49 C15.35 1.57 16.74 0.98 17.00 1.75 C17.25 2.51 16.23 3.78 15.72 6.98 C15.20 10.19 15.05 12.97 14.67 16.30 C14.28 19.63 14.25 23.40 13.97 22.12 C13.69 20.84 13.26 14.58 13.39 10.48Z" fill="#2b2b2b"/><path d="M10.19 13.39 C10.57 11.95 12.53 11.27 13.39 12.81 C14.25 14.34 14.47 18.94 14.09 20.37 C13.70 21.81 12.50 20.86 11.64 19.32 C10.78 17.79 9.80 14.82 10.19 13.39Z" fill="#b5b5b5"/><path d="M10.48 17.46 C10.73 16.57 12.10 15.86 12.81 16.88 C13.51 17.90 13.93 21.22 13.68 22.12 C13.42 23.02 12.35 21.98 11.64 20.95 C10.94 19.93 10.22 18.36 10.48 17.46Z" fill="#3a3a3a" opacity="0.7"/><path d="M9.90 25.61 C10.66 23.31 10.75 21.47 11.64 20.95 C12.54 20.44 12.43 22.26 13.97 23.28 C15.51 24.31 16.58 25.61 18.63 25.61 C20.68 25.61 21.49 24.05 23.28 23.28 C25.08 22.51 24.98 21.86 26.78 22.12 C28.57 22.37 29.64 23.42 31.43 24.45 C33.22 25.47 33.49 25.75 34.92 26.78 C36.36 27.80 37.41 27.05 37.95 29.10 C38.49 31.15 38.03 33.02 37.37 36.09 C36.70 39.16 36.23 40.19 34.92 43.07 C33.62 45.95 34.25 47.58 31.43 49.19 C28.61 50.79 25.45 51.12 22.12 50.35 C18.79 49.58 18.86 48.32 16.30 45.69 C13.74 43.07 12.27 41.55 10.48 38.42 C8.68 35.28 8.28 34.25 8.15 31.43 C8.02 28.61 9.13 27.92 9.90 25.61Z" fill="#323232"/><path d="M18.63 36.09 C19.39 33.02 23.45 33.50 26.78 33.76 C30.10 34.02 32.74 34.69 33.76 37.25 C34.78 39.81 33.74 43.10 31.43 45.40 C29.13 47.71 26.10 49.78 23.28 47.73 C20.47 45.68 17.86 39.16 18.63 36.09Z" fill="#4a4a4a" opacity="0.7"/><path d="M24.16 30.27 C24.41 29.45 27.44 28.86 29.10 28.99 C30.77 29.12 31.98 30.03 31.72 30.85 C31.47 31.67 29.60 32.84 27.94 32.71 C26.27 32.58 23.90 31.09 24.16 30.27Z" fill="#d2d2d2"/><path d="M26.48 15.13 C27.51 13.85 27.99 14.51 29.10 16.30 C30.22 18.09 32.06 21.46 31.55 23.28 C31.04 25.10 28.34 24.82 26.78 24.56 C25.21 24.31 24.51 24.19 24.45 22.12 C24.38 20.04 25.46 16.41 26.48 15.13Z" fill="#dcdcdc"/><path d="M18.04 13.39 C18.04 13.11 19.87 12.10 21.54 12.22 C23.20 12.35 25.61 13.69 25.61 13.97 C25.61 14.25 23.20 13.63 21.54 13.50 C19.87 13.38 18.04 13.67 18.04 13.39Z" fill="#3a3a3a"/><path d="M31.43 15.42 C31.43 15.17 33.52 14.70 34.92 15.02 C36.33 15.34 37.83 16.62 37.83 16.88 C37.83 17.14 36.33 16.50 34.92 16.18 C33.52 15.86 31.43 15.68 31.43 15.42Z" fill="#454545"/><path d="M18.92 14.84 C18.98 14.39 20.61 14.13 21.83 14.26 C23.04 14.39 24.51 14.98 24.45 15.42 C24.38 15.87 22.75 16.43 21.54 16.30 C20.32 16.17 18.85 15.29 18.92 14.84Z" fill="#222"/><path d="M31.72 17.17 C31.79 16.74 33.48 16.57 34.63 16.76 C35.79 16.96 37.03 17.61 36.96 18.04 C36.90 18.48 35.49 18.93 34.34 18.74 C33.19 18.55 31.66 17.61 31.72 17.17Z" fill="#333"/></g></g></svg></div>
<span id="nm8" class="t nm" style="left:390.82px;top:951.8px;letter-spacing:0.036px;">Derek Briggs</span>
<span id="cl8" class="t cl" style="left:390.96px;top:973.61px;letter-spacing:0.398px;">5A</span>
<span id="id8" class="t td sid" style="left:747.14px;top:961.8px;letter-spacing:0.702px;">1234567890</span>
<span id="gr8" class="t td gr" style="left:948.1px;top:961.8px;transform:scaleX(1.1);transform-origin:0 0;">5</span>
<span id="phn8" class="t td phn" style="left:1050.86px;top:961.8px;letter-spacing:0.636px;">1234567890</span>
<span id="ad8" class="t td ad" style="left:1251.13px;top:961.8px;letter-spacing:0.401px;">123 Main St, Anytown, USA</span>
<div class="abs btn" style="left:1682px;top:952px;background:#c3ebfa"><svg width="35" height="35" viewBox="0 0 35 35" fill="none" stroke="#f2fbff" stroke-width="1.5" style="display:block"><path d="M7.7 18 C11.5 9.8 22.7 9.8 26.5 18 C22.7 26.2 11.5 26.2 7.7 18 Z" stroke-linejoin="round"/><circle cx="17.1" cy="18" r="3.7" fill="#b5e6ec" fill-opacity="0.4"/></svg></div>
<div class="abs btn" style="left:1727px;top:952px;background:#cfceff"><svg width="35" height="35" viewBox="0 0 35 35" fill="none" stroke="#f6f5ff" stroke-width="1.6" style="display:block"><path d="M7.6 12.4 H26.2" stroke-width="1.5"/><path d="M13.2 12.2 V10.3 a1.6 1.6 0 0 1 1.6 -1.6 H19.2 a1.6 1.6 0 0 1 1.6 1.6 V12.2"/><path d="M14.6 10.5 H19.4" stroke-width="1.2" stroke="#e4e2ff"/><path d="M9.8 14.5 V23.9 a3.4 3.4 0 0 0 3.4 3.4 H20.8 a3.4 3.4 0 0 0 3.4 -3.4 V14.5"/><path d="M15 15.4 V22.8 M19 15.4 V22.8" stroke-width="1.6"/></svg></div>
<div class="abs" style="left:301px;top:1016px;width:1536px;height:15px;background:#f8fafc"></div>
<div class="abs" style="left:261px;top:1017px;width:1614px;height:14px;background:#fcfcfc"></div>
<svg class="abs" style="left:261px;top:1017px" width="20" height="14" viewBox="261 1017 20 14"><path d="M267.6 1027 L275.2 1021.7 L275.2 1032.3 Z" fill="#8b8b8b" stroke="#8b8b8b" stroke-width="1.4" stroke-linejoin="round"/></svg>
<svg class="abs" style="left:1855px;top:1017px" width="20" height="14" viewBox="1855 1017 20 14"><path d="M1870.6 1027 L1863 1021.7 L1863 1032.3 Z" fill="#8b8b8b" stroke="#8b8b8b" stroke-width="1.4" stroke-linejoin="round"/></svg>
</body></html>
